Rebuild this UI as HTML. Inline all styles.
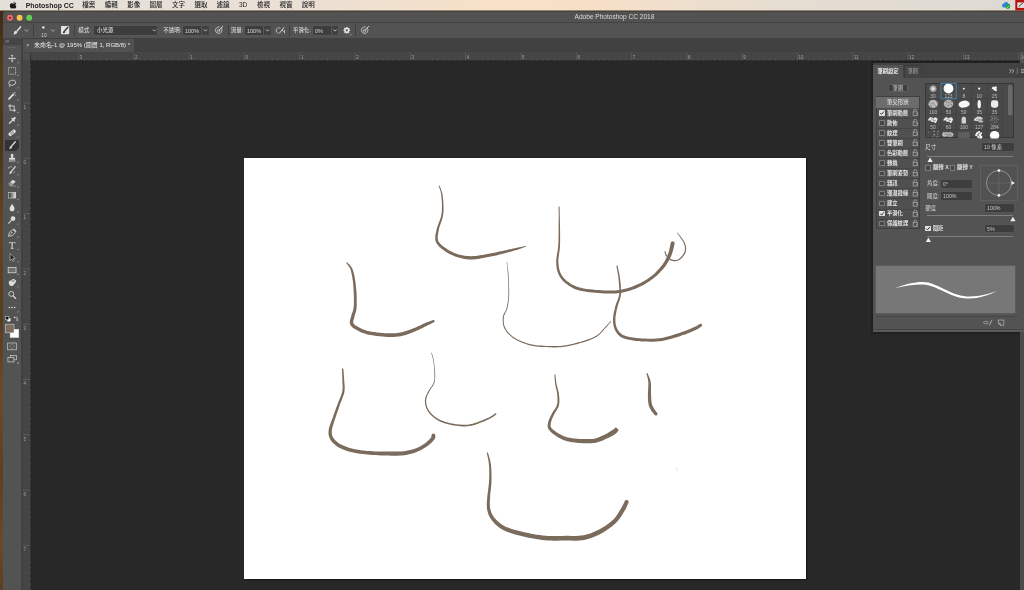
<!DOCTYPE html>
<html lang="zh-Hant"><head><meta charset="utf-8"><title>Adobe Photoshop CC 2018</title>
<style>
html,body{margin:0;padding:0;}
body{width:1024px;height:590px;overflow:hidden;background:#282828;position:relative;font-family:"Liberation Sans","Noto Sans CJK TC",sans-serif;color:#d0d0d0;}
div,span{position:absolute;box-sizing:border-box;white-space:nowrap;}
svg{position:absolute;left:0;top:0;overflow:visible;}
.t{line-height:1;transform-origin:0 0;}
.mb{font-size:6.5px;color:#222;top:2.3px;font-weight:500;}
.ob{font-size:5.5px;color:#d8d8d8;top:28.1px;font-weight:500;}
.in{background:#3d3d3d;border-radius:1px;box-shadow:0 0 0 .5px #5b5b5b;}
.sq{transform:scaleX(.9);}
.dd{background:#414141;border-radius:1px;box-shadow:0 0 0 .5px #595959;}
.sep{width:0.7px;background:#3e3e3e;top:24.5px;height:11.5px;}
.pl{font-size:5.4px;color:#dadada;}
.cb{width:5.6px;height:5.6px;background:#464646;border:0.5px solid #7c7c7c;border-radius:0.8px;}
.cbc{width:5.6px;height:5.6px;background:#e4e4e4;border-radius:0.8px;}
.num{font-size:4.9px;color:#bbbbbb;text-align:center;width:15.4px;}
.rl{font-size:4.5px;color:#a2a2a2;}
</style></head><body>
<div id="w" style="left:0;top:0;width:1024px;height:590px;will-change:transform;">

<div style="left:0;top:10px;width:4px;height:580px;background:linear-gradient(180deg,#3e2a14,#553a1b 10%,#4a3217 22%,#644624 38%,#573c1d 52%,#6a4b27 66%,#5c401f 80%,#68492a 92%,#5a3f20);"></div>
<div style="left:0;top:0;width:1024px;height:10.6px;background:linear-gradient(90deg,#e4dfd9 0%,#e9e0d7 25%,#f1e0cd 40%,#f8e1c6 50%,#f7dfc6 57%,#efdfcd 66%,#e4ddd2 78%,#dedad3 100%);border-bottom:1px solid #94887a;"></div>
<svg width="1024" height="11" viewBox="0 0 1024 11"><g fill="#1a1a1a"><path d="M14.9 3.1c-.9 0-1.3.5-1.9.5s-1.1-.5-1.8-.5c-1 0-2 .9-2 2.5 0 1.7 1.2 3.5 2.1 3.5.6 0 .8-.4 1.6-.4s.9.4 1.6.4c.9 0 1.7-1.5 2-2.4-1.3-.6-1.4-2.6-.1-3.2-.4-.5-1-.9-1.5-.9z" transform="translate(1.55,0.35) scale(.9)"/><path d="M13.3 2.9c0-.9.7-1.6 1.5-1.7.1.9-.7 1.7-1.5 1.7z" transform="translate(1.55,0.45) scale(.9)"/></g></svg>
<span class="t mb" style="left:25.7px;font-weight:bold;font-size:6.95px;top:2.6px;">Photoshop CC</span>
<span class="t mb" style="left:82.3px;">檔案</span>
<span class="t mb" style="left:104.7px;">編輯</span>
<span class="t mb" style="left:127.2px;">影像</span>
<span class="t mb" style="left:149.6px;">圖層</span>
<span class="t mb" style="left:172px;">文字</span>
<span class="t mb" style="left:194.4px;">選取</span>
<span class="t mb" style="left:216.6px;">濾鏡</span>
<span class="t mb" style="left:239px;">3D</span>
<span class="t mb" style="left:257px;">檢視</span>
<span class="t mb" style="left:279.4px;">視窗</span>
<span class="t mb" style="left:301.8px;">說明</span>
<svg width="1024" height="11" viewBox="0 0 1024 11"><path d="M1003.5 7.6h4.6a1.9 1.9 0 0 0 .3-3.8 2.3 2.3 0 0 0-4.3-.5 2.2 2.2 0 0 0-.6 4.3z" fill="#2f86dd"/><circle cx="1007.8" cy="6.6" r="2.3" fill="#23a033"/><path d="M1006.7 6.7l.8.8 1.4-1.6" stroke="#fff" stroke-width=".6" fill="none"/><rect x="1015.3" y="0" width="9" height="10.5" fill="#b3120f"/><rect x="1017.3" y="2.4" width="7" height="5.5" fill="#e6e0dc"/><path d="M1018.8 6.5l4.5-4" stroke="#222" stroke-width=".9"/></svg>
<div style="left:3.3px;top:10.6px;width:1021px;height:580px;background:#282828;border-top-left-radius:2.5px;overflow:hidden;">
</div>
<div style="left:3.3px;top:10.8px;width:1021px;height:12px;background:#525252;border-top-left-radius:2.5px;border-top:1px solid #47413a;border-bottom:0.6px solid #444;"></div>
<svg width="60" height="30" viewBox="0 0 60 30"><circle cx="10.05" cy="17.7" r="2.95" fill="#ee6a5e"/><circle cx="19.6" cy="17.7" r="2.95" fill="#f6c550"/><circle cx="29.2" cy="17.7" r="2.95" fill="#60cf56"/><circle cx="10.05" cy="17.7" r=".95" fill="#6e0f0b"/></svg>
<span class="t" style="left:574.6px;top:13.6px;font-size:6.55px;color:#dcdcdc;">Adobe Photoshop CC 2018</span>
<div style="left:3.3px;top:22px;width:1021px;height:16px;background:#535353;border-top:0.7px solid #434343;"></div>
<svg width="1024" height="60" viewBox="0 0 1024 60"><g fill="none" stroke="#e0e0e0" stroke-linecap="round"><path d="M20.5 26.9L17.3 30.7" stroke-width="1.6"/><path d="M16.3 30.9c-1.1-.3-2 .4-2.2 1.5-.1.9-.5 1.5-1.1 1.9 1.5.4 3.5-.1 4.1-1.5.4-.8 0-1.6-.8-1.9z" fill="#e0e0e0" stroke="none"/><path d="M25 29.8l1.5 1.5 1.5-1.5" stroke-width=".8" stroke="#c8c8c8"/><path d="M51.5 29.8l1.5 1.5 1.5-1.5" stroke-width=".8" stroke="#c8c8c8"/></g><circle cx="43.3" cy="27.4" r="1.2" fill="#f0f0f0"/><rect x="61" y="26" width="8.2" height="8.2" rx=".6" fill="#e3e3e3"/><path d="M67.9 27.2l-3 3.4" stroke="#3c3c3c" stroke-width="1.5" stroke-linecap="round"/><path d="M64.6 30.7c-.9 0-1.5.6-1.5 1.3 0 .5-.3.9-.7 1.1 1.1.3 2.6-.1 2.8-1.1.1-.6-.1-1.1-.6-1.3z" fill="#3c3c3c"/></svg>
<span class="t" style="left:41.3px;top:33.5px;font-size:4.7px;color:#d0d0d0;">10</span>
<div class="sep" style="left:32.6px;"></div><div class="sep" style="left:74.1px;"></div>
<span class="t ob" style="left:78.2px;">模式:</span>
<div class="in" style="left:93.7px;top:26.3px;width:63.4px;height:8.3px;background:#3d3d3d;"></div>
<span class="t ob" style="left:97px;">小光源</span>
<span class="t ob" style="left:163.3px;">不透明:</span>
<div class="in" style="left:182.8px;top:26.3px;width:18.2px;height:8.3px;"></div><span class="t ob sq" style="left:184.6px;font-size:6.1px;top:27.8px;">100%</span>
<div class="dd" style="left:202.3px;top:26.3px;width:6.4px;height:8.3px;"></div>
<div class="sep" style="left:227.5px;"></div>
<span class="t ob" style="left:230.8px;">流量:</span>
<div class="in" style="left:245px;top:26.3px;width:18px;height:8.3px;"></div><span class="t ob sq" style="left:246.8px;font-size:6.1px;top:27.8px;">100%</span>
<div class="dd" style="left:264.4px;top:26.3px;width:6.4px;height:8.3px;"></div>
<div class="sep" style="left:288.8px;"></div>
<span class="t ob" style="left:293px;">平滑化:</span>
<div class="in" style="left:313px;top:26.3px;width:17.6px;height:8.3px;"></div><span class="t ob sq" style="left:314.8px;font-size:6.1px;top:27.8px;">0%</span>
<div class="dd" style="left:332.2px;top:26.3px;width:6px;height:8.3px;"></div>
<div class="sep" style="left:355.3px;"></div>
<svg width="1024" height="60" viewBox="0 0 1024 60"><g fill="none" stroke="#d0d0d0" stroke-width=".85" stroke-linecap="round" transform="translate(.25 .1)"><path d="M152.9 29.7l1.25 1.3 1.25-1.3"/><path d="M203.9 29.7l1.25 1.3 1.25-1.3"/><path d="M266 29.7l1.25 1.3 1.25-1.3"/><path d="M333.6 29.7l1.25 1.3 1.25-1.3"/></g></svg>
<svg width="1024" height="60" viewBox="0 0 1024 60"><g fill="none" stroke="#d8d8d8" stroke-width=".75" stroke-linecap="round"><path d="M221.5 28.4a3.3 3.3 0 1 1-2.3-1.5"/><circle cx="218.4" cy="30.8" r="1.3" stroke-width=".6"/><path d="M222.6 26.4l-3.6 4" stroke-width="1"/><path d="M367.5 28.4a3.3 3.3 0 1 1-2.3-1.5"/><circle cx="364.4" cy="30.8" r="1.3" stroke-width=".6"/><path d="M368.6 26.4l-3.6 4" stroke-width="1"/><path d="M277.6 32.8c-1.5-.6-2-2.6-.9-4 .9-1.1 2.4-1.3 3.5-.7"/><path d="M279.3 33.3l2.7-3.3 1.4 1.1" stroke-width=".9"/><path d="M282.2 29.8l1.6-2.1" stroke-width="1"/><path d="M284.5 30.5v2.5" stroke-width=".8"/></g><g><circle cx="346.8" cy="30.3" r="2.5" fill="#e4e4e4"/><rect x="346.1" y="27" width="1.4" height="6.6" fill="#e4e4e4" transform="rotate(0 346.8 30.3)"/><rect x="346.1" y="27" width="1.4" height="6.6" fill="#e4e4e4" transform="rotate(45 346.8 30.3)"/><rect x="346.1" y="27" width="1.4" height="6.6" fill="#e4e4e4" transform="rotate(90 346.8 30.3)"/><rect x="346.1" y="27" width="1.4" height="6.6" fill="#e4e4e4" transform="rotate(135 346.8 30.3)"/><circle cx="346.8" cy="30.3" r="1.1" fill="#535353"/><path d="M349.8 34.6h1.8l-.9.9z" fill="#d0d0d0"/></g></svg>
<div style="left:21px;top:38px;width:1003px;height:14.6px;background:#414141;"></div>
<div style="left:23.2px;top:38.6px;width:110.8px;height:14px;background:#515151;"></div>
<span class="t" style="left:26px;top:42.4px;font-size:6px;color:#c6c6c6;">×</span>
<span class="t" style="left:34px;top:42.2px;font-size:6px;color:#ececec;">未命名-1 @ 195% (圖層 1, RGB/8) *</span>
<div style="left:21.6px;top:52.4px;width:1003px;height:8.6px;background:#454545;border-bottom:0.6px solid #2e2e2e;"></div>
<div style="left:21.6px;top:52.6px;width:9.2px;height:537.4px;background:#454545;border-right:0.6px solid #303030;"></div>
<div style="left:20.9px;top:52.6px;width:2.1px;height:537.4px;background:#414141;"></div>
<div style="left:23.4px;top:53.4px;width:6.4px;height:6.6px;background:#4f4f4f;"></div>
<svg width="1024" height="590" viewBox="0 0 1024 590"><g stroke="#6b6b6b" stroke-width=".5" fill="none"><path d="M34.36 59v1.3"/><path d="M39.89 59v1.3"/><path d="M45.42 59v1.3"/><path d="M50.95 58v2.3"/><path d="M56.48 59v1.3"/><path d="M62.01 59v1.3"/><path d="M67.54 59v1.3"/><path d="M73.07 59v1.3"/><path d="M84.13 59v1.3"/><path d="M89.66 59v1.3"/><path d="M95.19 59v1.3"/><path d="M100.72 59v1.3"/><path d="M106.25 58v2.3"/><path d="M111.78 59v1.3"/><path d="M117.31 59v1.3"/><path d="M122.84 59v1.3"/><path d="M128.37 59v1.3"/><path d="M139.43 59v1.3"/><path d="M144.96 59v1.3"/><path d="M150.49 59v1.3"/><path d="M156.02 59v1.3"/><path d="M161.55 58v2.3"/><path d="M167.08 59v1.3"/><path d="M172.61 59v1.3"/><path d="M178.14 59v1.3"/><path d="M183.67 59v1.3"/><path d="M194.73 59v1.3"/><path d="M200.26 59v1.3"/><path d="M205.79 59v1.3"/><path d="M211.32 59v1.3"/><path d="M216.85 58v2.3"/><path d="M222.38 59v1.3"/><path d="M227.91 59v1.3"/><path d="M233.44 59v1.3"/><path d="M238.97 59v1.3"/><path d="M250.03 59v1.3"/><path d="M255.56 59v1.3"/><path d="M261.09 59v1.3"/><path d="M266.62 59v1.3"/><path d="M272.15 58v2.3"/><path d="M277.68 59v1.3"/><path d="M283.21 59v1.3"/><path d="M288.74 59v1.3"/><path d="M294.27 59v1.3"/><path d="M305.33 59v1.3"/><path d="M310.86 59v1.3"/><path d="M316.39 59v1.3"/><path d="M321.92 59v1.3"/><path d="M327.45 58v2.3"/><path d="M332.98 59v1.3"/><path d="M338.51 59v1.3"/><path d="M344.04 59v1.3"/><path d="M349.57 59v1.3"/><path d="M360.63 59v1.3"/><path d="M366.16 59v1.3"/><path d="M371.69 59v1.3"/><path d="M377.22 59v1.3"/><path d="M382.75 58v2.3"/><path d="M388.28 59v1.3"/><path d="M393.81 59v1.3"/><path d="M399.34 59v1.3"/><path d="M404.87 59v1.3"/><path d="M415.93 59v1.3"/><path d="M421.46 59v1.3"/><path d="M426.99 59v1.3"/><path d="M432.52 59v1.3"/><path d="M438.05 58v2.3"/><path d="M443.58 59v1.3"/><path d="M449.11 59v1.3"/><path d="M454.64 59v1.3"/><path d="M460.17 59v1.3"/><path d="M471.23 59v1.3"/><path d="M476.76 59v1.3"/><path d="M482.29 59v1.3"/><path d="M487.82 59v1.3"/><path d="M493.35 58v2.3"/><path d="M498.88 59v1.3"/><path d="M504.41 59v1.3"/><path d="M509.94 59v1.3"/><path d="M515.47 59v1.3"/><path d="M526.53 59v1.3"/><path d="M532.06 59v1.3"/><path d="M537.59 59v1.3"/><path d="M543.12 59v1.3"/><path d="M548.65 58v2.3"/><path d="M554.18 59v1.3"/><path d="M559.71 59v1.3"/><path d="M565.24 59v1.3"/><path d="M570.77 59v1.3"/><path d="M581.83 59v1.3"/><path d="M587.36 59v1.3"/><path d="M592.89 59v1.3"/><path d="M598.42 59v1.3"/><path d="M603.95 58v2.3"/><path d="M609.48 59v1.3"/><path d="M615.01 59v1.3"/><path d="M620.54 59v1.3"/><path d="M626.07 59v1.3"/><path d="M637.13 59v1.3"/><path d="M642.66 59v1.3"/><path d="M648.19 59v1.3"/><path d="M653.72 59v1.3"/><path d="M659.25 58v2.3"/><path d="M664.78 59v1.3"/><path d="M670.31 59v1.3"/><path d="M675.84 59v1.3"/><path d="M681.37 59v1.3"/><path d="M692.43 59v1.3"/><path d="M697.96 59v1.3"/><path d="M703.49 59v1.3"/><path d="M709.02 59v1.3"/><path d="M714.55 58v2.3"/><path d="M720.08 59v1.3"/><path d="M725.61 59v1.3"/><path d="M731.14 59v1.3"/><path d="M736.67 59v1.3"/><path d="M747.73 59v1.3"/><path d="M753.26 59v1.3"/><path d="M758.79 59v1.3"/><path d="M764.32 59v1.3"/><path d="M769.85 58v2.3"/><path d="M775.38 59v1.3"/><path d="M780.91 59v1.3"/><path d="M786.44 59v1.3"/><path d="M791.97 59v1.3"/><path d="M803.03 59v1.3"/><path d="M808.56 59v1.3"/><path d="M814.09 59v1.3"/><path d="M819.62 59v1.3"/><path d="M825.15 58v2.3"/><path d="M830.68 59v1.3"/><path d="M836.21 59v1.3"/><path d="M841.74 59v1.3"/><path d="M847.27 59v1.3"/><path d="M858.33 59v1.3"/><path d="M863.86 59v1.3"/><path d="M869.39 59v1.3"/><path d="M874.92 59v1.3"/><path d="M880.45 58v2.3"/><path d="M885.98 59v1.3"/><path d="M891.51 59v1.3"/><path d="M897.04 59v1.3"/><path d="M902.57 59v1.3"/><path d="M913.63 59v1.3"/><path d="M919.16 59v1.3"/><path d="M924.69 59v1.3"/><path d="M930.22 59v1.3"/><path d="M935.75 58v2.3"/><path d="M941.28 59v1.3"/><path d="M946.81 59v1.3"/><path d="M952.34 59v1.3"/><path d="M957.87 59v1.3"/><path d="M968.93 59v1.3"/><path d="M974.46 59v1.3"/><path d="M979.99 59v1.3"/><path d="M985.52 59v1.3"/><path d="M991.05 58v2.3"/><path d="M996.58 59v1.3"/><path d="M1002.11 59v1.3"/><path d="M1007.64 59v1.3"/><path d="M1013.17 59v1.3"/><path d="M29.2 64.29h1.3"/><path d="M29.2 69.82h1.3"/><path d="M28.2 75.35h2.3"/><path d="M29.2 80.88h1.3"/><path d="M29.2 86.41h1.3"/><path d="M29.2 91.94h1.3"/><path d="M29.2 97.47h1.3"/><path d="M29.2 108.53h1.3"/><path d="M29.2 114.06h1.3"/><path d="M29.2 119.59h1.3"/><path d="M29.2 125.12h1.3"/><path d="M28.2 130.65h2.3"/><path d="M29.2 136.18h1.3"/><path d="M29.2 141.71h1.3"/><path d="M29.2 147.24h1.3"/><path d="M29.2 152.77h1.3"/><path d="M29.2 163.83h1.3"/><path d="M29.2 169.36h1.3"/><path d="M29.2 174.89h1.3"/><path d="M29.2 180.42h1.3"/><path d="M28.2 185.95h2.3"/><path d="M29.2 191.48h1.3"/><path d="M29.2 197.01h1.3"/><path d="M29.2 202.54h1.3"/><path d="M29.2 208.07h1.3"/><path d="M29.2 219.13h1.3"/><path d="M29.2 224.66h1.3"/><path d="M29.2 230.19h1.3"/><path d="M29.2 235.72h1.3"/><path d="M28.2 241.25h2.3"/><path d="M29.2 246.78h1.3"/><path d="M29.2 252.31h1.3"/><path d="M29.2 257.84h1.3"/><path d="M29.2 263.37h1.3"/><path d="M29.2 274.43h1.3"/><path d="M29.2 279.96h1.3"/><path d="M29.2 285.49h1.3"/><path d="M29.2 291.02h1.3"/><path d="M28.2 296.55h2.3"/><path d="M29.2 302.08h1.3"/><path d="M29.2 307.61h1.3"/><path d="M29.2 313.14h1.3"/><path d="M29.2 318.67h1.3"/><path d="M29.2 329.73h1.3"/><path d="M29.2 335.26h1.3"/><path d="M29.2 340.79h1.3"/><path d="M29.2 346.32h1.3"/><path d="M28.2 351.85h2.3"/><path d="M29.2 357.38h1.3"/><path d="M29.2 362.91h1.3"/><path d="M29.2 368.44h1.3"/><path d="M29.2 373.97h1.3"/><path d="M29.2 385.03h1.3"/><path d="M29.2 390.56h1.3"/><path d="M29.2 396.09h1.3"/><path d="M29.2 401.62h1.3"/><path d="M28.2 407.15h2.3"/><path d="M29.2 412.68h1.3"/><path d="M29.2 418.21h1.3"/><path d="M29.2 423.74h1.3"/><path d="M29.2 429.27h1.3"/><path d="M29.2 440.33h1.3"/><path d="M29.2 445.86h1.3"/><path d="M29.2 451.39h1.3"/><path d="M29.2 456.92h1.3"/><path d="M28.2 462.45h2.3"/><path d="M29.2 467.98h1.3"/><path d="M29.2 473.51h1.3"/><path d="M29.2 479.04h1.3"/><path d="M29.2 484.57h1.3"/><path d="M29.2 495.63h1.3"/><path d="M29.2 501.16h1.3"/><path d="M29.2 506.69h1.3"/><path d="M29.2 512.22h1.3"/><path d="M28.2 517.75h2.3"/><path d="M29.2 523.28h1.3"/><path d="M29.2 528.81h1.3"/><path d="M29.2 534.34h1.3"/><path d="M29.2 539.87h1.3"/><path d="M29.2 550.93h1.3"/><path d="M29.2 556.46h1.3"/><path d="M29.2 561.99h1.3"/><path d="M29.2 567.52h1.3"/><path d="M28.2 573.05h2.3"/><path d="M29.2 578.58h1.3"/><path d="M29.2 584.11h1.3"/><path d="M29.2 589.64h1.3"/></g><g stroke="#6c6c6c" stroke-width=".55" fill="none"><path d="M78.6 52.8v7.5"/><path d="M133.9 52.8v7.5"/><path d="M189.2 52.8v7.5"/><path d="M244.5 52.8v7.5"/><path d="M299.8 52.8v7.5"/><path d="M355.1 52.8v7.5"/><path d="M410.4 52.8v7.5"/><path d="M465.7 52.8v7.5"/><path d="M521 52.8v7.5"/><path d="M576.3 52.8v7.5"/><path d="M631.6 52.8v7.5"/><path d="M686.9 52.8v7.5"/><path d="M742.2 52.8v7.5"/><path d="M797.5 52.8v7.5"/><path d="M852.8 52.8v7.5"/><path d="M908.1 52.8v7.5"/><path d="M963.4 52.8v7.5"/><path d="M1018.7 52.8v7.5"/><path d="M23 103h7.5"/><path d="M23 158.3h7.5"/><path d="M23 213.6h7.5"/><path d="M23 268.9h7.5"/><path d="M23 324.2h7.5"/><path d="M23 379.5h7.5"/><path d="M23 434.8h7.5"/><path d="M23 490.1h7.5"/><path d="M23 545.4h7.5"/></g></svg>
<span class="t rl" style="left:79.7px;top:56.4px;">3</span>
<span class="t rl" style="left:135px;top:56.4px;">2</span>
<span class="t rl" style="left:190.3px;top:56.4px;">1</span>
<span class="t rl" style="left:245.6px;top:56.4px;">0</span>
<span class="t rl" style="left:300.9px;top:56.4px;">1</span>
<span class="t rl" style="left:356.2px;top:56.4px;">2</span>
<span class="t rl" style="left:411.5px;top:56.4px;">3</span>
<span class="t rl" style="left:466.8px;top:56.4px;">4</span>
<span class="t rl" style="left:522.1px;top:56.4px;">5</span>
<span class="t rl" style="left:577.4px;top:56.4px;">6</span>
<span class="t rl" style="left:632.7px;top:56.4px;">7</span>
<span class="t rl" style="left:688px;top:56.4px;">8</span>
<span class="t rl" style="left:743.3px;top:56.4px;">9</span>
<span class="t rl" style="left:798.6px;top:56.4px;">10</span>
<span class="t rl" style="left:853.9px;top:56.4px;">11</span>
<span class="t rl" style="left:909.2px;top:56.4px;">12</span>
<span class="t rl" style="left:964.5px;top:56.4px;">13</span>
<span class="t rl" style="left:23.4px;top:105.7px;">1</span>
<span class="t rl" style="left:23.4px;top:161px;">0</span>
<span class="t rl" style="left:23.4px;top:216.3px;">1</span>
<span class="t rl" style="left:23.4px;top:271.6px;">2</span>
<span class="t rl" style="left:23.4px;top:326.9px;">3</span>
<span class="t rl" style="left:23.4px;top:382.2px;">4</span>
<span class="t rl" style="left:23.4px;top:437.5px;">5</span>
<span class="t rl" style="left:23.4px;top:492.8px;">6</span>
<span class="t rl" style="left:23.4px;top:548.1px;">7</span>
<div style="left:1020.3px;top:52.4px;width:3.7px;height:537.6px;background:#4a4a4a;"></div>
<div style="left:1020.3px;top:52.4px;width:3.7px;height:10.5px;background:#535353;"></div>
<span class="t rl" style="left:1020.8px;top:56.4px;">14</span>
<div style="left:3.3px;top:38px;width:17.8px;height:552px;background:#535353;"></div>
<div style="left:3.3px;top:38px;width:17.8px;height:6.7px;background:#454545;"></div>
<svg width="30" height="50" viewBox="0 0 30 50"><path d="M5.8 40l1.2 1.3-1.2 1.3M7.6 40l1.2 1.3-1.2 1.3" fill="none" stroke="#b4b4b4" stroke-width=".55"/></svg>
<div style="left:8.4px;top:47px;width:8px;height:0.7px;background:#616161;"></div>
<div style="left:5px;top:140.2px;width:14.4px;height:10.8px;background:#333;border-radius:1px;"></div>
<svg width="24" height="590" viewBox="0 0 24 590"><g transform="translate(12.1 58.4) scale(.92)"><path d="M0-4.2L1.3-2.6H.45V-.45H2.6V-1.3L4.2 0 2.6 1.3V.45H.45V2.6H1.3L0 4.2-1.3 2.6H-.45V.45H-2.6V1.3L-4.2 0-2.6-1.3V-.45H-.45V-2.6H-1.3Z" fill="#dcdcdc"/></g><path d="M18.4 61.8v1.4h-1.4z" fill="#bcbcbc"/><g transform="translate(12.1 70.9) scale(.92)"><rect x="-3.8" y="-3.6" width="7.6" height="7.2" fill="none" stroke="#dcdcdc" stroke-width=".8" stroke-dasharray="1.5 .9"/></g><path d="M18.4 74.3v1.4h-1.4z" fill="#bcbcbc"/><g transform="translate(12.1 83.4) scale(.92)"><ellipse cx=".3" cy="-.7" rx="3.9" ry="2.7" fill="none" stroke="#dcdcdc" stroke-width=".8" transform="rotate(-12)"/><path d="M-2.8 1.2c-.8.6-.8 1.6.1 1.7.5 0 .4.7-.2 1.2" fill="none" stroke="#dcdcdc" stroke-width=".7"/></g><path d="M18.4 86.8v1.4h-1.4z" fill="#bcbcbc"/><g transform="translate(12.1 95.6) scale(.92)"><path d="M-3.4 3.6L.8 -.8" stroke="#dcdcdc" stroke-width="1.9" stroke-linecap="round"/><path d="M.6-.6L1.9-1.9" stroke="#dcdcdc" stroke-width="1.9"/><path d="M2.6-3.8v1.6M1.8-3h1.6M3.7-.9v1.2M.2-3.3l.5.5M3.8-3.4l-.5.5" stroke="#dcdcdc" stroke-width=".55"/></g><path d="M18.4 99v1.4h-1.4z" fill="#bcbcbc"/><g transform="translate(12.1 108.1) scale(.92)"><path d="M-2.3-4.3V2.3H4.3M-4.3-2.3H2.3V4.3" fill="none" stroke="#dcdcdc" stroke-width=".95"/></g><path d="M18.4 111.5v1.4h-1.4z" fill="#bcbcbc"/><g transform="translate(12.1 120.6) scale(.92)"><path d="M-3.8 3.8L-3.3 2.3.3-1.3 1.3-.3-2.3 3.3Z" fill="#dcdcdc"/><path d="M-.4-2.5L2.5.4" stroke="#dcdcdc" stroke-width="1.3" stroke-linecap="round"/><path d="M1.2-1.2L2.8-2.8" stroke="#dcdcdc" stroke-width="2.3" stroke-linecap="round"/></g><path d="M18.4 124v1.4h-1.4z" fill="#bcbcbc"/><g transform="translate(12.1 132.8) scale(.92)"><rect x="-4.4" y="-2" width="8.8" height="4" rx="1.6" fill="#dcdcdc" transform="rotate(-38)"/><g transform="rotate(-38)" fill="#535353"><rect x="-1.5" y="-2" width=".5" height="4"/><rect x="1" y="-2" width=".5" height="4"/><circle cx="-.5" cy="-.6" r=".3"/><circle cx=".5" cy=".6" r=".3"/><circle cx=".5" cy="-.6" r=".3"/><circle cx="-.5" cy=".6" r=".3"/></g></g><path d="M18.4 136.2v1.4h-1.4z" fill="#bcbcbc"/><g transform="translate(12.1 145.4) scale(.92)"><path d="M3.5-4L-.3.4" stroke="#dcdcdc" stroke-width="1.4" stroke-linecap="round"/><path d="M-.7.7c-.9-.2-1.7.4-1.8 1.3-.1.8-.5 1.3-1 1.6 1.3.3 2.9-.1 3.4-1.3.3-.6 0-1.3-.6-1.6z" fill="#dcdcdc"/></g><path d="M18.4 148.8v1.4h-1.4z" fill="#bcbcbc"/><g transform="translate(12.1 157.9) scale(.92)"><path d="M-1.3-2.2a1.5 1.5 0 1 1 2.6 0c-.4.7-.5 1.3-.3 2.1H3.2V2H-3.2V-.1H-1c.2-.8.1-1.4-.3-2.1z" fill="#dcdcdc"/><rect x="-3.6" y="2.9" width="7.2" height=".9" fill="#dcdcdc"/></g><path d="M18.4 161.3v1.4h-1.4z" fill="#bcbcbc"/><g transform="translate(12.1 170.4) scale(.92)"><path d="M3.5-4L-.3.4" stroke="#dcdcdc" stroke-width="1.3" stroke-linecap="round"/><path d="M-.7.7c-.9-.2-1.7.4-1.8 1.3-.1.8-.5 1.3-1 1.6 1.3.3 2.9-.1 3.4-1.3.3-.6 0-1.3-.6-1.6z" fill="#dcdcdc"/><path d="M-3.8-2.6a3 3 0 0 1 4-1M2.8 1a3 3 0 0 1-1.2 2.2" fill="none" stroke="#dcdcdc" stroke-width=".6"/><path d="M-4.3-3.4l.4 1.3 1.2-.5z" fill="#dcdcdc"/></g><path d="M18.4 173.8v1.4h-1.4z" fill="#bcbcbc"/><g transform="translate(12.1 182.7) scale(.92)"><path d="M-3.9 1.1L.6-3.3 4 -1.3 -.8 3.2H-2.6Z" fill="#dcdcdc"/><path d="M-3.9 1.1L-1.7-1 .8 1.5-.8 3.2H-2.6Z" fill="#8d8d8d"/><path d="M-1 3.6H4" stroke="#dcdcdc" stroke-width=".5"/></g><path d="M18.4 186.1v1.4h-1.4z" fill="#bcbcbc"/><g transform="translate(12.1 195.2) scale(.92)"><defs><linearGradient id="gg" x1="0" x2="1"><stop offset="0" stop-color="#2e2e2e"/><stop offset="1" stop-color="#e8e8e8"/></linearGradient></defs><rect x="-4" y="-3.1" width="8" height="6.2" fill="url(#gg)" stroke="#dcdcdc" stroke-width=".6"/></g><path d="M18.4 198.6v1.4h-1.4z" fill="#bcbcbc"/><g transform="translate(12.1 207.7) scale(.92)"><path d="M0-4.2C1 -2.4 2.7-.7 2.7 1.3a2.7 2.7 0 0 1-5.4 0C-2.7-.7-1-2.4 0-4.2z" fill="#dcdcdc"/></g><path d="M18.4 211.1v1.4h-1.4z" fill="#bcbcbc"/><g transform="translate(12.1 219.8) scale(.92)"><circle cx="1" cy="-1.3" r="2.6" fill="#dcdcdc"/><path d="M-.9.7L-3.8 3.8" stroke="#dcdcdc" stroke-width="1.1" stroke-linecap="round"/></g><path d="M18.4 223.2v1.4h-1.4z" fill="#bcbcbc"/><g transform="translate(12.1 232.6) scale(.92)"><path d="M-4 4L-2.8-.6 1.2-3.3 3.7-.4 .8 3.2Z" fill="none" stroke="#dcdcdc" stroke-width=".8" stroke-linejoin="round"/><path d="M-4 4L-.6.6" stroke="#dcdcdc" stroke-width=".6"/><circle cx="-.2" cy=".2" r=".8" fill="#dcdcdc"/><path d="M1.6-4.1L4.3-1" stroke="#dcdcdc" stroke-width="1.2"/></g><path d="M18.4 236v1.4h-1.4z" fill="#bcbcbc"/><g transform="translate(12.1 245.3) scale(.92)"><text x="0" y="4" font-family="Liberation Serif,serif" font-size="12" text-anchor="middle" fill="#dcdcdc">T</text></g><path d="M18.4 248.7v1.4h-1.4z" fill="#bcbcbc"/><g transform="translate(12.1 257.4) scale(.92)"><path d="M-2.2-4.2L-2.2 3.4-.3 1.7 1 4.3 2.2 3.7 .9 1.2 3.3 1Z" fill="#1e1e1e" stroke="#dcdcdc" stroke-width=".6" stroke-linejoin="round"/></g><path d="M18.4 260.8v1.4h-1.4z" fill="#bcbcbc"/><g transform="translate(12.1 270.1) scale(.92)"><rect x="-4.3" y="-2.9" width="8.6" height="5.8" fill="#6e6e6e" stroke="#dcdcdc" stroke-width=".8"/></g><path d="M18.4 273.5v1.4h-1.4z" fill="#bcbcbc"/><g transform="translate(12.1 282.4) scale(.92)"><path d="M-3.6.2c0-1.2.7-2 1.8-2.3.9-.3 1.8-1.2 2.8-1.5 1.1-.3 2 .2 2.3 1 .8 0 1.3.6 1.1 1.4C4.1.4 2.7 1.6 1.6 2.7 1 3.3.5 3.9-.7 4c-1.7.1-2.9-1.7-2.9-3.8z" fill="#dcdcdc"/><path d="M-1.4-1.3c1.2-.4 2.3-.2 3.4.5M-.2-2.3c1.3-.2 2.6.2 3.6 1" stroke="#535353" stroke-width=".55" fill="none"/></g><path d="M18.4 285.8v1.4h-1.4z" fill="#bcbcbc"/><g transform="translate(12.1 294.9) scale(.92)"><circle cx="-.9" cy="-1.1" r="2.7" fill="none" stroke="#dcdcdc" stroke-width=".9"/><path d="M1.1 1L3.9 3.9" stroke="#dcdcdc" stroke-width="1.3" stroke-linecap="round"/></g><g transform="translate(12.1 307.5) scale(.92)"><circle cx="-2.9" cy="0" r=".85" fill="#dcdcdc"/><circle cx="0" cy="0" r=".85" fill="#dcdcdc"/><circle cx="2.9" cy="0" r=".85" fill="#dcdcdc"/></g><path d="M18.4 310.9v1.4h-1.4z" fill="#bcbcbc"/><rect x="7.3" y="318.3" width="3" height="3" fill="#fff" stroke="#ccc" stroke-width=".3"/><rect x="5.6" y="316.6" width="3.2" height="3.2" fill="#111" stroke="#ddd" stroke-width=".5"/><path d="M14.3 317.4h2.9v3" fill="none" stroke="#d8d8d8" stroke-width=".6"/><path d="M14.9 316.3l-1.3 1.1 1.3 1.1zM16.1 319.8l1.1 1.3 1.1-1.3z" fill="#d8d8d8"/><rect x="10.1" y="329.2" width="8.7" height="8.4" fill="#ffffff" stroke="#d9d9d9" stroke-width=".4"/><rect x="5.4" y="324.2" width="8.6" height="8.6" fill="#7d6b5d" stroke="#cfcfcf" stroke-width=".6"/><rect x="7.7" y="343" width="8.6" height="6.8" fill="none" stroke="#d0d0d0" stroke-width=".7"/><circle cx="12" cy="346.4" r="2" fill="none" stroke="#d0d0d0" stroke-width=".6" stroke-dasharray=".8 .6"/><rect x="10.4" y="355.4" width="6" height="4.4" fill="none" stroke="#d0d0d0" stroke-width=".7"/><rect x="7.9" y="357.5" width="6" height="4.4" fill="#535353" stroke="#d0d0d0" stroke-width=".7"/><path d="M18.6 361.7v1.7h-1.7z" fill="#c0c0c0"/></svg>
<div style="left:244px;top:157.75px;width:562.2px;height:421.3px;background:#fff;box-shadow:1px 1px 1.5px rgba(0,0,0,.45);"></div>
<svg width="1024" height="590" viewBox="0 0 1024 590"><path d="M438.6 185.8 L438.8 186.6 L439.2 187.6 L439.7 188.8 L440.2 190.3 L440.7 191.8 L441.1 193.6 L441.3 195.5 L441.5 197.7 L441.7 200.2 L441.9 203 L441.9 205.8 L441.9 208.7 L441.8 211.4 L441.5 213.9 L441.1 216.2 L440.4 218.4 L439.7 220.6 L438.8 222.8 L438 224.9 L437.3 227 L436.7 229.1 L436.3 231 L435.9 232.8 L435.5 234.6 L435.3 236.4 L435.2 238.2 L435.3 239.9 L435.8 241.7 L436.5 243.3 L437.6 244.8 L438.8 246.2 L440.2 247.5 L441.6 248.7 L443.1 249.8 L444.6 250.9 L446.1 251.9 L447.8 252.9 L449.5 253.9 L451.3 254.8 L453.1 255.6 L455 256.4 L456.8 257 L458.7 257.6 L460.6 258.1 L462.5 258.6 L464.5 258.9 L466.5 259.2 L468.6 259.4 L470.8 259.4 L473.1 259.4 L475.5 259.2 L478 258.9 L480.5 258.5 L483 258.1 L485.6 257.6 L488.1 257.1 L490.7 256.6 L493.4 256 L496.2 255.4 L498.9 254.7 L501.6 254 L504 253.4 L506.3 252.8 L508.4 252.3 L510.3 251.8 L512.1 251.3 L513.7 250.8 L515.3 250.3 L516.8 249.9 L518.2 249.4 L519.6 248.9 L521 248.5 L522.3 248 L523.5 247.6 L524.5 247.2 L525.4 246.8 L526.1 246.6 L525.9 246 L525.2 246.1 L524.3 246.3 L523.2 246.5 L522 246.8 L520.6 247 L519.2 247.3 L517.8 247.6 L516.3 247.9 L514.8 248.2 L513.2 248.6 L511.5 248.9 L509.7 249.3 L507.8 249.7 L505.7 250.2 L503.4 250.7 L500.9 251.2 L498.2 251.8 L495.5 252.5 L492.8 253 L490.1 253.6 L487.5 254.1 L485 254.5 L482.5 254.9 L480 255.3 L477.6 255.7 L475.2 255.9 L472.9 256.1 L470.8 256.2 L468.8 256.1 L466.8 256 L464.9 255.8 L463.1 255.5 L461.3 255.1 L459.5 254.7 L457.8 254.2 L456 253.6 L454.3 252.9 L452.5 252.1 L450.8 251.3 L449.2 250.4 L447.7 249.5 L446.2 248.5 L444.8 247.5 L443.3 246.5 L442 245.4 L440.7 244.3 L439.7 243.1 L438.8 241.9 L438.2 240.7 L437.9 239.5 L437.7 238.1 L437.7 236.6 L437.9 235 L438.2 233.3 L438.5 231.4 L438.9 229.5 L439.3 227.6 L440 225.6 L440.7 223.5 L441.5 221.3 L442.2 219 L442.9 216.6 L443.3 214.1 L443.5 211.5 L443.6 208.7 L443.5 205.8 L443.4 202.9 L443.2 200.1 L442.9 197.6 L442.7 195.3 L442.3 193.3 L441.8 191.5 L441.3 189.9 L440.7 188.5 L440.2 187.2 L439.7 186.2 L439.4 185.4Z" fill="#7a6b5c"/>
<path d="M346.2 263.1 L346.6 263.6 L347.2 264.3 L347.8 265.1 L348.5 266 L349.2 266.9 L349.9 267.9 L350.3 269 L350.8 270.1 L351.1 271.4 L351.4 272.8 L351.7 274.2 L352 275.7 L352.3 277.3 L352.5 279 L352.8 280.7 L353 282.6 L353.2 284.4 L353.4 286.4 L353.5 288.4 L353.6 290.4 L353.7 292.5 L353.8 294.6 L353.9 296.9 L353.9 299.2 L353.9 301.5 L353.9 303.7 L353.8 305.7 L353.6 307.5 L353.4 308.9 L353.1 310.2 L352.8 311.3 L352.4 312.4 L352 313.4 L351.6 314.6 L351.3 315.7 L351 316.8 L350.7 317.9 L350.3 319.1 L350 320.3 L349.8 321.6 L349.8 323 L350.1 324.3 L350.7 325.5 L351.6 326.6 L352.5 327.4 L353.6 328.2 L354.7 329 L355.9 329.6 L357.2 330.3 L358.5 331 L359.8 331.7 L361.3 332.4 L362.9 333 L364.6 333.6 L366.5 334.2 L368.6 334.7 L371 335.1 L373.7 335.6 L376.5 336 L379.4 336.3 L382.3 336.6 L385 336.8 L387.5 336.9 L389.8 337 L391.9 337 L393.9 337 L395.8 336.8 L397.7 336.6 L399.6 336.4 L401.6 336 L403.6 335.5 L405.7 334.9 L407.7 334.2 L409.8 333.5 L411.7 332.8 L413.6 332 L415.3 331.3 L417 330.6 L418.6 329.9 L420.1 329.1 L421.6 328.4 L423 327.7 L424.3 327 L425.6 326.4 L426.9 325.7 L428.3 325 L429.7 324.4 L431 323.7 L432.2 323.1 L433.1 322.7 L433.9 322.3 L434.3 322 L434.5 321.6 L434.6 321.2 L434.5 320.7 L434.2 320.3 L433.8 320.1 L433.4 320 L432.9 320.1 L432.2 320.4 L431.1 320.8 L429.9 321.2 L428.5 321.7 L427.1 322.3 L425.6 322.8 L424.2 323.4 L422.8 324 L421.5 324.7 L420.1 325.4 L418.6 326.1 L417.2 326.8 L415.7 327.4 L414.1 328.1 L412.3 328.8 L410.5 329.5 L408.5 330.2 L406.6 330.8 L404.6 331.5 L402.7 332 L400.8 332.4 L399 332.7 L397.2 333 L395.5 333.2 L393.7 333.3 L391.8 333.3 L389.8 333.3 L387.7 333.3 L385.3 333.2 L382.6 333 L379.8 332.7 L376.9 332.4 L374.2 332.1 L371.6 331.7 L369.4 331.3 L367.4 330.9 L365.7 330.3 L364.1 329.8 L362.7 329.2 L361.3 328.6 L360 327.9 L358.8 327.3 L357.6 326.6 L356.5 326 L355.6 325.4 L354.7 324.8 L354.1 324.2 L353.6 323.6 L353.3 323.1 L353.2 322.6 L353.2 321.9 L353.3 321 L353.5 320 L353.9 318.9 L354.2 317.7 L354.5 316.5 L354.7 315.4 L355 314.4 L355.4 313.4 L355.7 312.2 L356.1 310.9 L356.4 309.4 L356.6 307.7 L356.7 305.8 L356.7 303.7 L356.7 301.5 L356.7 299.1 L356.7 296.8 L356.6 294.5 L356.5 292.3 L356.3 290.3 L356.1 288.2 L355.9 286.2 L355.7 284.2 L355.5 282.2 L355.2 280.4 L354.9 278.6 L354.6 276.9 L354.2 275.3 L353.9 273.7 L353.5 272.2 L353.1 270.8 L352.6 269.5 L352.1 268.2 L351.4 267 L350.6 265.9 L349.7 265 L348.9 264.1 L348.1 263.4 L347.5 262.8 L347 262.3Z" fill="#7a6b5c"/>
<path d="M558.6 206.4 L558.6 208.1 L558.6 210.4 L558.7 213.2 L558.7 216.2 L558.7 219.4 L558.6 222.5 L558.6 225.5 L558.6 228.4 L558.6 231.4 L558.6 234.4 L558.5 237.4 L558.5 240.4 L558.4 243.2 L558.2 245.8 L558 248.3 L557.7 250.6 L557.3 252.8 L556.9 255 L556.6 257 L556.3 259.1 L556.2 261.1 L556.2 263 L556.3 264.8 L556.4 266.6 L556.7 268.3 L557 269.9 L557.4 271.5 L558 273 L558.6 274.5 L559.3 275.9 L560.1 277.3 L561 278.6 L562.1 279.9 L563.2 281.2 L564.6 282.4 L566 283.6 L567.6 284.8 L569.3 286 L571.1 287.1 L573.1 288.2 L575.3 289.2 L577.7 290 L580.3 290.7 L583.1 291.3 L586.1 291.8 L589.2 292.2 L592.3 292.5 L595.4 292.8 L598.4 293.1 L601.3 293.3 L604.3 293.4 L607.3 293.6 L610.3 293.6 L613.2 293.6 L616.2 293.4 L619 293.1 L621.8 292.7 L624.5 292.1 L627.1 291.4 L629.7 290.7 L632.3 289.8 L634.8 288.9 L637.2 287.9 L639.6 286.8 L642 285.7 L644.3 284.4 L646.5 283.1 L648.7 281.7 L650.8 280.3 L652.8 278.8 L654.8 277.3 L656.6 275.7 L658.4 274 L660.1 272.3 L661.7 270.6 L663.2 268.9 L664.6 267.2 L665.9 265.5 L667 263.8 L668.1 262.1 L669 260.4 L669.9 258.7 L670.7 257.1 L671.4 255.4 L672.1 253.6 L672.7 251.6 L673.2 249.7 L673.7 247.8 L674.1 246.1 L674.4 244.8 L674.6 243.8 L674.7 243 L674.4 242.3 L673.9 241.7 L673.2 241.4 L672.4 241.3 L671.7 241.6 L671.1 242.1 L670.8 242.8 L670.5 243.9 L670.2 245.3 L669.9 247 L669.5 248.8 L669.1 250.6 L668.6 252.4 L668 254 L667.4 255.6 L666.7 257.2 L665.9 258.8 L665.1 260.4 L664.2 262 L663.2 263.6 L662 265.2 L660.7 266.8 L659.3 268.5 L657.8 270.1 L656.2 271.8 L654.6 273.4 L652.8 274.9 L651 276.4 L649.1 277.8 L647.1 279.2 L645 280.5 L642.8 281.8 L640.6 283 L638.3 284.1 L636 285.1 L633.7 286.1 L631.3 287 L628.8 287.8 L626.3 288.5 L623.8 289.1 L621.2 289.7 L618.6 290.1 L615.9 290.4 L613.1 290.6 L610.3 290.6 L607.4 290.6 L604.4 290.5 L601.5 290.3 L598.6 290.1 L595.6 289.9 L592.6 289.6 L589.5 289.3 L586.5 288.9 L583.6 288.4 L581 287.8 L578.5 287.2 L576.4 286.5 L574.3 285.6 L572.5 284.7 L570.7 283.7 L569.1 282.6 L567.6 281.5 L566.2 280.4 L565 279.3 L564 278.2 L563 277.1 L562.2 276 L561.5 274.8 L560.8 273.5 L560.2 272.2 L559.7 270.8 L559.3 269.3 L559 267.9 L558.7 266.3 L558.6 264.7 L558.4 262.9 L558.4 261.1 L558.4 259.2 L558.6 257.3 L558.9 255.3 L559.2 253.1 L559.5 250.9 L559.8 248.5 L560 246 L560.1 243.3 L560.1 240.4 L560.1 237.5 L560.1 234.4 L560.1 231.4 L560 228.4 L560 225.5 L559.9 222.5 L559.9 219.4 L559.8 216.2 L559.7 213.2 L559.7 210.4 L559.6 208.1 L559.6 206.4Z" fill="#7a6b5c"/>
<path d="M677 232.8 L677.7 233.8 L678.7 235.2 L679.8 236.8 L681 238.6 L682.2 240.3 L683.2 242 L683.9 243.5 L684.3 244.9 L684.7 246.1 L684.9 247.4 L685 248.6 L684.9 249.7 L684.7 250.9 L684.4 252 L683.9 253.1 L683.2 254.3 L682.3 255.6 L681.3 256.7 L680.3 257.8 L679.3 258.6 L678.3 259.3 L677.4 259.7 L676.3 259.9 L675.3 260 L674.2 259.9 L673.1 259.8 L672.1 259.5 L671.2 259.2 L670.4 258.8 L669.6 258.2 L668.8 257.5 L668.1 256.7 L667.4 255.8 L666.9 255.1 L666.4 254.4 L666.1 253.8 L665.9 253.3 L665.7 252.7 L665.7 252.2 L665.6 251.7 L665.6 251.3 L665.6 251 L664.6 251 L664.7 251.4 L664.7 251.8 L664.7 252.3 L664.7 252.9 L664.8 253.6 L665 254.3 L665.4 255 L665.9 255.7 L666.5 256.6 L667.2 257.4 L668 258.3 L668.8 259.1 L669.8 259.8 L670.8 260.4 L671.8 260.7 L672.9 261 L674.1 261.2 L675.3 261.2 L676.5 261.1 L677.7 260.8 L678.9 260.3 L680 259.6 L681.1 258.7 L682.3 257.6 L683.3 256.3 L684.2 255 L685 253.7 L685.6 252.4 L685.9 251.1 L686.1 249.9 L686.2 248.6 L686.1 247.2 L685.8 245.9 L685.4 244.5 L684.9 243.1 L684.1 241.5 L683.1 239.8 L681.8 238 L680.5 236.3 L679.3 234.7 L678.3 233.4 L677.6 232.4Z" fill="#7a6b5c"/>
<path d="M616.4 265.8 L616.6 267 L616.9 268.6 L617.3 270.4 L617.6 272.5 L618 274.7 L618.3 276.9 L618.5 279 L618.7 281.1 L618.9 283.3 L619.1 285.5 L619.3 287.8 L619.4 290 L619.3 292.1 L619.2 294.1 L618.8 296 L618.4 297.7 L617.8 299.5 L617.1 301.2 L616.4 303 L615.8 304.8 L615.2 306.6 L614.8 308.5 L614.4 310.4 L613.9 312.3 L613.6 314.1 L613.3 316 L613.1 317.8 L613 319.6 L613 321.3 L613.1 322.9 L613.3 324.5 L613.6 326.1 L614 327.6 L614.5 329 L615.2 330.4 L615.9 331.7 L616.7 333 L617.6 334.2 L618.7 335.3 L620 336.4 L621.6 337.4 L623.4 338.2 L625.5 338.9 L627.9 339.6 L630.4 340.1 L633.2 340.5 L636 340.9 L638.8 341.1 L641.6 341.4 L644.4 341.5 L647.3 341.6 L650.2 341.7 L653.2 341.7 L656.2 341.5 L659.2 341.3 L662.2 340.9 L665.3 340.3 L668.4 339.6 L671.6 338.7 L674.7 337.8 L677.6 336.9 L680.4 336 L682.9 335.1 L685.2 334.4 L687.4 333.6 L689.4 332.8 L691.2 332 L692.9 331.3 L694.4 330.6 L695.8 330 L697.1 329.3 L698.2 328.7 L699.1 328.1 L699.9 327.6 L700.6 327.1 L701.1 326.7 L701.5 326.4 L701.9 326 L702.1 325.5 L702.1 324.9 L701.9 324.4 L701.5 324 L701 323.8 L700.4 323.8 L699.9 324 L699.4 324.2 L698.9 324.6 L698.2 325 L697.5 325.5 L696.6 326 L695.6 326.5 L694.4 327 L693.1 327.6 L691.6 328.3 L689.9 329 L688.1 329.8 L686.2 330.5 L684.1 331.3 L681.9 332.1 L679.4 332.9 L676.6 333.8 L673.7 334.8 L670.7 335.7 L667.7 336.6 L664.7 337.3 L661.8 337.9 L658.9 338.3 L656 338.5 L653.1 338.7 L650.2 338.7 L647.4 338.7 L644.5 338.6 L641.8 338.4 L639.1 338.2 L636.3 338 L633.6 337.6 L630.9 337.2 L628.5 336.8 L626.3 336.2 L624.4 335.6 L622.9 334.9 L621.6 334.1 L620.6 333.3 L619.7 332.4 L618.9 331.4 L618.1 330.3 L617.4 329.2 L616.9 328 L616.4 326.8 L616 325.5 L615.7 324.1 L615.6 322.7 L615.4 321.2 L615.4 319.6 L615.4 318 L615.6 316.3 L615.9 314.5 L616.2 312.7 L616.6 310.8 L617 309 L617.4 307.2 L617.8 305.4 L618.4 303.7 L619 302 L619.7 300.2 L620.2 298.3 L620.7 296.3 L621 294.3 L621.2 292.2 L621.1 289.9 L621 287.7 L620.8 285.4 L620.6 283.1 L620.3 280.9 L620.1 278.8 L619.8 276.7 L619.4 274.5 L619 272.3 L618.5 270.2 L618.1 268.3 L617.8 266.8 L617.6 265.6Z" fill="#7a6b5c"/>
<path d="M506.6 262.1 L506.8 263.4 L507 265 L507.2 267 L507.4 269.2 L507.6 271.5 L507.8 274 L507.9 276.4 L508.1 279 L508.2 281.8 L508.3 284.8 L508.3 287.8 L508.4 290.7 L508.4 293.4 L508.3 295.9 L508.2 298.1 L508 300 L507.7 301.9 L507.5 303.6 L507.2 305.2 L506.8 306.8 L506.5 308.3 L506 309.7 L505.4 310.9 L504.8 312.1 L504.1 313.3 L503.5 314.5 L503.1 315.8 L502.8 317.2 L502.7 318.8 L502.7 320.5 L502.8 322.2 L503 323.9 L503.3 325.7 L503.9 327.4 L504.6 329 L505.6 330.6 L506.7 332.2 L508 333.7 L509.5 335.1 L511.1 336.5 L512.8 337.9 L514.6 339.1 L516.6 340.2 L518.7 341.3 L521 342.3 L523.4 343.3 L525.8 344.1 L528.3 344.9 L530.8 345.5 L533.3 346 L535.8 346.4 L538.4 346.7 L541.1 346.9 L543.7 347 L546.2 347.1 L548.7 347.2 L551 347.3 L553.3 347.4 L555.6 347.4 L557.8 347.3 L560.1 347.2 L562.4 347 L564.8 346.7 L567.3 346.3 L569.9 345.8 L572.5 345.2 L575.2 344.6 L577.8 343.9 L580.3 343.1 L582.7 342.4 L585 341.7 L587.2 340.9 L589.4 340.2 L591.5 339.3 L593.5 338.5 L595.3 337.5 L597.1 336.5 L598.7 335.3 L600.2 334 L601.6 332.6 L602.8 331.2 L604 329.8 L605 328.6 L606 327.4 L607 326.4 L608 325.3 L608.8 324.3 L609.6 323.4 L610.3 322.6 L610.8 322 L611.3 321.4 L610.7 321 L610.3 321.5 L609.7 322.1 L609 322.9 L608.2 323.8 L607.3 324.7 L606.4 325.7 L605.4 326.8 L604.3 327.9 L603.2 329.2 L602 330.5 L600.8 331.9 L599.5 333.2 L598 334.4 L596.5 335.5 L594.8 336.5 L593 337.4 L591 338.2 L588.9 339 L586.8 339.8 L584.6 340.5 L582.3 341.2 L579.9 341.9 L577.4 342.6 L574.9 343.3 L572.2 344 L569.6 344.6 L567.1 345.1 L564.6 345.5 L562.3 345.8 L560 346 L557.8 346.1 L555.6 346.1 L553.4 346.1 L551.1 346.1 L548.7 346 L546.3 345.9 L543.7 345.8 L541.1 345.6 L538.6 345.4 L536 345.2 L533.5 344.8 L531 344.3 L528.6 343.7 L526.2 343 L523.8 342.1 L521.5 341.2 L519.2 340.3 L517.1 339.2 L515.2 338.1 L513.4 336.9 L511.8 335.7 L510.2 334.3 L508.8 332.9 L507.5 331.5 L506.5 330 L505.6 328.6 L504.9 327 L504.3 325.4 L504 323.8 L503.8 322.1 L503.7 320.4 L503.7 318.8 L503.8 317.4 L504 316.1 L504.5 314.9 L505 313.7 L505.6 312.6 L506.3 311.3 L506.9 310 L507.3 308.5 L507.7 307 L508.1 305.4 L508.3 303.7 L508.6 302 L508.8 300.1 L509 298.1 L509.1 295.9 L509.2 293.4 L509.2 290.7 L509.1 287.8 L509 284.7 L508.9 281.8 L508.8 279 L508.7 276.4 L508.5 273.9 L508.3 271.5 L508 269.1 L507.7 266.9 L507.5 265 L507.3 263.3 L507.2 262.1Z" fill="#7a6b5c"/>
<path d="M341.9 368.4 L342 369.5 L342 371.1 L342.1 372.8 L342.2 374.8 L342.3 376.8 L342.3 378.8 L342.4 380.5 L342.4 382.2 L342.5 383.8 L342.6 385.3 L342.6 386.8 L342.6 388.4 L342.5 389.9 L342.2 391.5 L341.8 393.2 L341.2 394.9 L340.6 396.7 L339.8 398.5 L339 400.4 L338.2 402.4 L337.5 404.4 L336.7 406.5 L335.9 408.6 L335.1 410.9 L334.3 413.1 L333.5 415.3 L332.8 417.4 L332.1 419.3 L331.5 421 L330.9 422.5 L330.3 424 L329.8 425.4 L329.3 426.9 L328.9 428.3 L328.7 429.7 L328.6 431.1 L328.5 432.5 L328.5 433.8 L328.7 435.2 L329 436.5 L329.5 437.8 L330.1 439.2 L330.9 440.4 L331.9 441.7 L333 442.9 L334.2 444.1 L335.6 445.3 L337.1 446.4 L338.7 447.4 L340.5 448.3 L342.4 449.2 L344.4 450 L346.5 450.7 L348.7 451.4 L350.9 452 L353.2 452.6 L355.5 453.1 L357.8 453.5 L360.2 453.8 L362.7 454.1 L365.1 454.3 L367.6 454.5 L370.2 454.7 L372.8 454.9 L375.5 455.1 L378.3 455.3 L381.1 455.4 L383.8 455.5 L386.5 455.6 L389 455.6 L391.3 455.7 L393.6 455.7 L395.8 455.7 L397.9 455.7 L400 455.6 L402.1 455.5 L404.2 455.2 L406.2 454.9 L408.2 454.5 L410.2 454 L412.2 453.5 L414.1 452.9 L415.9 452.3 L417.7 451.6 L419.4 450.8 L421.1 450 L422.7 449.1 L424.3 448.1 L425.7 447.2 L427.1 446.2 L428.3 445.4 L429.5 444.5 L430.5 443.6 L431.5 442.7 L432.4 441.8 L433.1 440.9 L433.8 440.1 L434.4 439.4 L434.9 438.6 L435.2 437.8 L435.4 437 L435.4 436.3 L435.3 435.8 L435.3 435.7 L435.3 435.6 L435.2 434.8 L434.8 434.2 L434.2 433.7 L433.5 433.6 L432.7 433.7 L432.1 434.1 L431.6 434.7 L431.5 435.4 L431.5 435.8 L431.5 436.2 L431.5 436.4 L431.5 436.5 L431.5 436.7 L431.4 436.8 L431.2 437.2 L430.8 437.8 L430.2 438.4 L429.6 439.2 L428.9 440 L428 440.8 L427.1 441.6 L426.1 442.4 L425 443.3 L423.7 444.2 L422.3 445.1 L420.9 445.9 L419.4 446.8 L417.9 447.5 L416.3 448.2 L414.7 448.8 L413 449.3 L411.2 449.8 L409.3 450.2 L407.5 450.6 L405.6 450.9 L403.6 451.2 L401.7 451.4 L399.8 451.5 L397.8 451.6 L395.7 451.6 L393.6 451.6 L391.4 451.6 L389 451.6 L386.5 451.6 L383.9 451.5 L381.2 451.5 L378.4 451.4 L375.7 451.4 L373 451.2 L370.4 451.1 L367.9 450.9 L365.5 450.7 L363.1 450.4 L360.7 450.2 L358.4 449.8 L356.2 449.5 L354 449 L351.9 448.5 L349.7 447.9 L347.7 447.2 L345.7 446.5 L343.8 445.8 L342.1 445 L340.5 444.2 L339.1 443.4 L337.8 442.4 L336.6 441.5 L335.5 440.5 L334.6 439.5 L333.8 438.4 L333.1 437.4 L332.6 436.5 L332.2 435.5 L332 434.6 L331.9 433.5 L331.8 432.5 L331.8 431.3 L331.9 430.1 L332.1 428.9 L332.3 427.7 L332.7 426.4 L333.1 425 L333.6 423.5 L334.1 421.9 L334.7 420.1 L335.3 418.2 L336 416.2 L336.7 414 L337.5 411.7 L338.3 409.5 L339 407.3 L339.7 405.2 L340.4 403.2 L341.2 401.3 L342 399.4 L342.7 397.5 L343.4 395.6 L344 393.8 L344.4 391.9 L344.6 390.1 L344.7 388.4 L344.7 386.8 L344.6 385.2 L344.5 383.6 L344.3 382.1 L344.2 380.5 L344.1 378.7 L344 376.7 L343.8 374.7 L343.7 372.7 L343.5 371 L343.4 369.5 L343.3 368.4Z" fill="#7a6b5c"/>
<path d="M431.2 352.8 L431.3 353.4 L431.6 354.2 L431.9 355.2 L432.2 356.3 L432.5 357.5 L432.8 358.8 L433.1 360.1 L433.3 361.4 L433.6 363 L433.8 364.6 L434 366.2 L434.1 367.9 L434.3 369.6 L434.3 371.2 L434.4 372.8 L434.4 374.5 L434.4 376.1 L434.4 377.8 L434.3 379.4 L434 380.9 L433.7 382.3 L433.2 383.6 L432.6 384.8 L431.8 385.9 L431 387.1 L430.1 388.2 L429.3 389.4 L428.6 390.6 L428 391.8 L427.4 393 L426.8 394.2 L426.2 395.4 L425.7 396.6 L425.3 397.9 L425.1 399.1 L424.9 400.4 L424.9 401.6 L425 402.9 L425.1 404.1 L425.3 405.3 L425.7 406.6 L426.1 407.7 L426.6 408.9 L427.2 410.1 L427.8 411.2 L428.6 412.3 L429.4 413.4 L430.4 414.5 L431.4 415.5 L432.5 416.5 L433.7 417.5 L435 418.5 L436.3 419.4 L437.8 420.3 L439.3 421.2 L440.9 421.9 L442.6 422.6 L444.4 423.2 L446.2 423.8 L448.2 424.3 L450.1 424.8 L452.2 425.2 L454.2 425.5 L456.2 425.8 L458.4 426.1 L460.6 426.2 L462.8 426.4 L465 426.4 L467.2 426.3 L469.3 426.1 L471.4 425.8 L473.4 425.3 L475.4 424.7 L477.3 424 L479.1 423.3 L480.9 422.6 L482.5 422 L484.1 421.4 L485.6 420.7 L487 420.1 L488.4 419.4 L489.6 418.8 L490.8 418.2 L491.9 417.6 L492.9 417 L493.7 416.4 L494.5 415.8 L495.2 415.2 L495.8 414.7 L496.2 414.3 L496.6 414 L495.8 413 L495.4 413.3 L494.9 413.7 L494.3 414.1 L493.6 414.6 L492.9 415.1 L492 415.7 L491.1 416.2 L490.1 416.8 L488.9 417.4 L487.7 418 L486.3 418.6 L484.9 419.2 L483.5 419.8 L481.9 420.4 L480.2 421.1 L478.5 421.7 L476.7 422.4 L474.8 423.1 L472.9 423.7 L471 424.1 L469.1 424.5 L467.1 424.7 L465 424.7 L462.9 424.7 L460.7 424.6 L458.6 424.4 L456.5 424.2 L454.4 423.9 L452.4 423.6 L450.5 423.2 L448.6 422.8 L446.7 422.3 L444.9 421.7 L443.1 421.1 L441.5 420.5 L440 419.8 L438.5 419 L437.1 418.2 L435.8 417.3 L434.6 416.4 L433.5 415.4 L432.4 414.5 L431.4 413.5 L430.5 412.5 L429.7 411.5 L429 410.5 L428.4 409.4 L427.8 408.3 L427.3 407.3 L426.9 406.2 L426.6 405 L426.4 403.9 L426.2 402.8 L426.2 401.6 L426.2 400.4 L426.3 399.3 L426.5 398.2 L426.9 397 L427.3 395.8 L427.8 394.6 L428.4 393.4 L429 392.2 L429.6 391 L430.2 389.9 L430.9 388.8 L431.7 387.6 L432.6 386.5 L433.3 385.2 L434 383.9 L434.5 382.5 L434.8 381 L435 379.4 L435.2 377.8 L435.2 376.2 L435.2 374.5 L435.1 372.8 L435.1 371.2 L435 369.5 L434.8 367.9 L434.6 366.2 L434.4 364.5 L434.2 362.9 L433.9 361.3 L433.7 359.9 L433.4 358.6 L433.1 357.3 L432.8 356.1 L432.4 355 L432.1 354.1 L431.8 353.2 L431.6 352.6Z" fill="#7a6b5c"/>
<path d="M554.4 374.4 L554.5 375.3 L554.5 376.4 L554.6 377.7 L554.7 379.2 L554.8 380.8 L555 382.3 L555.1 383.8 L555.4 385.2 L555.7 386.7 L556 388.2 L556.4 389.6 L556.7 391.1 L556.9 392.5 L557.1 394 L557.3 395.5 L557.4 397.1 L557.5 398.7 L557.5 400.3 L557.5 401.8 L557.3 403.3 L557 404.6 L556.6 405.9 L555.9 407.2 L555.2 408.5 L554.3 409.8 L553.4 411 L552.6 412.3 L551.8 413.7 L551.2 415 L550.5 416.2 L549.9 417.5 L549.4 418.8 L548.9 420 L548.4 421.2 L548.1 422.4 L547.9 423.4 L547.7 424.4 L547.6 425.4 L547.7 426.4 L547.8 427.4 L548.2 428.4 L548.7 429.4 L549.5 430.5 L550.4 431.5 L551.4 432.4 L552.5 433.4 L553.7 434.3 L554.9 435.2 L556.2 436.1 L557.5 436.9 L558.8 437.7 L560.3 438.5 L561.8 439.3 L563.4 440 L565 440.6 L566.8 441.2 L568.7 441.6 L570.6 442 L572.6 442.3 L574.6 442.6 L576.7 442.7 L578.7 442.9 L580.7 443 L582.7 443.2 L584.7 443.3 L586.8 443.3 L588.8 443.3 L590.9 443.3 L592.8 443.1 L594.7 442.9 L596.5 442.6 L598.2 442.1 L599.8 441.6 L601.3 441 L602.8 440.4 L604.2 439.8 L605.5 439.1 L607 438.5 L608.5 437.7 L610.1 437 L611.5 436.2 L612.9 435.4 L614.1 434.7 L615.2 433.9 L616.2 433.2 L617 432.5 L617.6 431.7 L618 431.1 L618.4 430.6 L618.6 430.2 L618.8 429.9 L615.8 427.3 L615.5 427.6 L615.1 428 L614.7 428.4 L614.3 428.7 L613.8 429.1 L613.3 429.6 L612.6 430.1 L611.6 430.6 L610.5 431.3 L609.2 432.1 L607.9 432.9 L606.4 433.7 L605 434.4 L603.7 435.1 L602.3 435.7 L600.9 436.3 L599.6 436.9 L598.3 437.5 L596.9 438 L595.5 438.4 L594.1 438.7 L592.4 438.9 L590.6 439.1 L588.8 439.1 L586.8 439.1 L584.8 439.1 L582.9 439 L580.9 439 L579 438.9 L577 438.7 L575 438.6 L573.1 438.4 L571.2 438.1 L569.5 437.8 L567.8 437.4 L566.2 437 L564.7 436.5 L563.3 435.9 L561.9 435.2 L560.6 434.6 L559.3 433.9 L558 433.1 L556.8 432.4 L555.6 431.6 L554.5 430.8 L553.5 430 L552.6 429.2 L551.8 428.5 L551.3 427.8 L550.9 427.2 L550.7 426.6 L550.6 426 L550.6 425.4 L550.6 424.7 L550.7 423.9 L550.9 423 L551.1 422 L551.4 420.9 L551.8 419.8 L552.3 418.6 L552.8 417.3 L553.4 416 L554 414.7 L554.6 413.5 L555.3 412.3 L556.2 411 L557 409.6 L557.8 408.2 L558.5 406.7 L559 405.2 L559.2 403.5 L559.4 401.9 L559.4 400.3 L559.4 398.6 L559.2 397 L559.1 395.4 L558.9 393.8 L558.6 392.2 L558.3 390.7 L557.9 389.2 L557.5 387.8 L557.1 386.3 L556.8 385 L556.5 383.6 L556.2 382.2 L556 380.6 L555.8 379.1 L555.7 377.6 L555.6 376.3 L555.5 375.2 L555.4 374.4Z" fill="#7a6b5c"/>
<path d="M646.4 373.4 L646.6 374.2 L646.9 375.2 L647.2 376.5 L647.6 377.8 L647.9 379.3 L648.1 380.7 L648.3 382.2 L648.4 383.6 L648.3 385.3 L648.3 387 L648.2 388.8 L648.1 390.6 L648 392.3 L647.9 393.9 L647.9 395.4 L647.9 396.9 L647.9 398.3 L648 399.7 L648.1 401 L648.2 402.3 L648.4 403.5 L648.6 404.7 L648.9 405.7 L649.3 406.7 L649.6 407.6 L650 408.5 L650.5 409.3 L650.9 410.1 L651.4 410.9 L652 411.8 L652.7 412.6 L653.3 413.3 L653.8 414 L654.3 414.5 L654.6 414.9 L655.1 415.3 L655.7 415.5 L656.3 415.5 L656.9 415.2 L657.3 414.7 L657.5 414.1 L657.5 413.5 L657.2 412.9 L656.8 412.5 L656.4 411.9 L655.9 411.2 L655.3 410.5 L654.8 409.8 L654.3 409 L653.9 408.3 L653.5 407.6 L653.1 406.9 L652.8 406.2 L652.4 405.4 L652.1 404.7 L651.9 403.8 L651.6 402.9 L651.5 401.9 L651.4 400.7 L651.3 399.5 L651.2 398.2 L651.2 396.8 L651.1 395.4 L651.1 393.9 L651 392.3 L651 390.6 L651 388.9 L651 387 L651 385.2 L650.9 383.5 L650.7 381.8 L650.3 380.3 L649.9 378.7 L649.3 377.3 L648.7 375.9 L648.2 374.7 L647.8 373.8 L647.4 373Z" fill="#7a6b5c"/>
<path d="M486.7 452.7 L487 453.8 L487.3 455.2 L487.6 456.8 L488 458.6 L488.4 460.5 L488.7 462.5 L488.9 464.5 L489.1 466.6 L489.2 468.8 L489.2 471.1 L489.3 473.5 L489.2 475.9 L489.2 478.3 L489.1 480.6 L488.9 483 L488.7 485.3 L488.4 487.7 L488.1 490.1 L487.8 492.4 L487.5 494.7 L487.3 496.8 L487.1 498.8 L487 500.7 L486.8 502.5 L486.8 504.3 L486.8 506 L486.9 507.8 L487.1 509.5 L487.5 511.2 L487.9 512.8 L488.5 514.4 L489.1 515.9 L489.9 517.5 L490.9 519 L492 520.4 L493.2 521.9 L494.5 523.4 L496 524.9 L497.6 526.3 L499.4 527.8 L501.4 529.1 L503.7 530.3 L506.3 531.5 L509.1 532.5 L512.1 533.5 L515.2 534.4 L518.3 535.2 L521.4 536 L524.4 536.7 L527.4 537.4 L530.3 538 L533.3 538.6 L536.2 539.1 L539.2 539.5 L542.1 539.9 L545.1 540.2 L548.1 540.5 L551.1 540.6 L554.1 540.7 L557.1 540.7 L560 540.6 L562.8 540.6 L565.6 540.6 L568.3 540.6 L571 540.6 L573.7 540.7 L576.3 540.7 L579 540.6 L581.7 540.3 L584.3 539.9 L586.9 539.3 L589.5 538.6 L591.9 537.8 L594.3 536.8 L596.7 535.8 L599 534.7 L601.3 533.5 L603.5 532.2 L605.8 530.8 L608 529.3 L610.1 527.8 L612.2 526.2 L614.1 524.6 L615.9 522.9 L617.5 521.3 L619 519.5 L620.3 517.8 L621.4 516 L622.5 514.3 L623.4 512.8 L624.3 511.3 L625.2 509.8 L626 508.4 L626.6 507 L627.2 505.6 L627.7 504.5 L628.1 503.6 L628.4 502.9 L628.6 502.1 L628.5 501.3 L628.1 500.6 L627.5 500.2 L626.7 500 L625.9 500.1 L625.2 500.5 L624.8 501.1 L624.4 501.9 L624 502.8 L623.4 503.9 L622.9 505.1 L622.2 506.4 L621.5 507.7 L620.7 509.1 L619.8 510.5 L618.8 512.1 L617.8 513.7 L616.8 515.3 L615.6 516.9 L614.3 518.4 L612.9 519.9 L611.3 521.3 L609.5 522.8 L607.6 524.3 L605.5 525.7 L603.4 527.1 L601.3 528.3 L599.1 529.5 L597 530.6 L594.8 531.6 L592.6 532.6 L590.4 533.4 L588.1 534.1 L585.8 534.8 L583.5 535.3 L581.1 535.6 L578.7 535.8 L576.3 535.9 L573.7 535.9 L571.1 535.9 L568.4 535.8 L565.6 535.8 L562.8 535.9 L559.9 536 L557 536 L554.1 536.1 L551.2 536 L548.3 535.9 L545.5 535.8 L542.6 535.5 L539.8 535.1 L536.9 534.7 L534 534.3 L531.1 533.7 L528.3 533.1 L525.4 532.5 L522.4 531.8 L519.3 531.1 L516.3 530.3 L513.3 529.5 L510.4 528.6 L507.8 527.6 L505.5 526.7 L503.5 525.6 L501.7 524.5 L500.1 523.3 L498.6 522.1 L497.2 520.8 L496 519.5 L494.8 518.2 L493.8 516.9 L493 515.6 L492.2 514.4 L491.6 513.1 L491.1 511.7 L490.7 510.3 L490.3 508.9 L490 507.4 L489.9 505.9 L489.8 504.3 L489.8 502.6 L489.9 500.9 L490 499 L490.1 497 L490.2 494.9 L490.4 492.7 L490.7 490.4 L491 488 L491.2 485.6 L491.4 483.1 L491.5 480.8 L491.5 478.4 L491.5 475.9 L491.5 473.5 L491.4 471 L491.3 468.7 L491.1 466.4 L490.9 464.3 L490.5 462.2 L490.1 460.2 L489.6 458.2 L489.1 456.4 L488.6 454.8 L488.1 453.5 L487.9 452.5Z" fill="#7a6b5c"/><path d="M676.3 467.5l1 3.4" stroke="#f3d9c8" stroke-width=".9" fill="none"/></svg>
<div style="left:871.2px;top:61px;width:149.1px;height:272.6px;background:#202020;"></div>
<div style="left:873px;top:62.9px;width:151px;height:269.5px;background:#535353;"></div>
<div style="left:873px;top:62.9px;width:151px;height:14.9px;background:#424242;"></div>
<div style="left:873px;top:64.5px;width:30.1px;height:13.3px;background:#535353;"></div>
<div style="left:903.5px;top:64.6px;width:18.9px;height:13.2px;background:#454545;border:0.5px solid #3b3b3b;border-bottom:none;"></div>
<span class="t pl" style="left:877.4px;top:69.2px;font-size:5.3px;color:#f0f0f0;font-weight:bold;">筆刷設定</span>
<span class="t pl" style="left:907.4px;top:69.2px;font-size:5.3px;color:#a8a8a8;">筆刷</span>
<svg width="1024" height="590" viewBox="0 0 1024 590"><g fill="none" stroke="#d2d2d2" stroke-width=".75"><path d="M1009.4 69.1l1.9 1.9-1.9 1.9M1011.9 69.1l1.9 1.9-1.9 1.9"/><path d="M1017.3 68.3v5.6" stroke="#8a8a8a"/><path d="M1020.8 69.4h3.2M1020.8 71h3.2M1020.8 72.6h3.2" stroke-width=".6"/></g></svg>
<div style="left:888px;top:83.8px;width:20px;height:8.3px;background:#3f3f3f;border:0.6px solid #5c5c5c;border-radius:1px;"></div>
<span class="t pl" style="left:892.6px;top:86.1px;font-size:5.3px;">筆刷</span>
<div style="left:875.7px;top:96.4px;width:44.3px;height:132.4px;background:#505050;border:0.6px solid #404040;"></div>
<div style="left:876.3px;top:97px;width:43.1px;height:10.5px;background:#6c6c6c;"></div>
<span class="t pl" style="left:886.7px;top:100.3px;font-size:5.5px;color:#f2f2f2;">筆尖形狀</span>
<div class="cbc" style="left:879.2px;top:110.1px;"></div>
<span class="t pl" style="left:887px;top:110.5px;font-size:5.3px;font-weight:bold;color:#e6e6e6;">筆刷動態</span>
<div style="left:876.3px;top:117.9px;width:43.1px;height:0.5px;background:#454545;"></div>
<div class="cb" style="left:879.2px;top:120.2px;"></div>
<span class="t pl" style="left:887px;top:120.6px;font-size:5.3px;font-weight:bold;color:#e6e6e6;">散佈</span>
<div style="left:876.3px;top:127.9px;width:43.1px;height:0.5px;background:#454545;"></div>
<div class="cb" style="left:879.2px;top:130.2px;"></div>
<span class="t pl" style="left:887px;top:130.6px;font-size:5.3px;font-weight:bold;color:#e6e6e6;">紋理</span>
<div style="left:876.3px;top:138px;width:43.1px;height:0.5px;background:#454545;"></div>
<div class="cb" style="left:879.2px;top:140.3px;"></div>
<span class="t pl" style="left:887px;top:140.7px;font-size:5.3px;font-weight:bold;color:#e6e6e6;">雙筆刷</span>
<div style="left:876.3px;top:148.1px;width:43.1px;height:0.5px;background:#454545;"></div>
<div class="cb" style="left:879.2px;top:150.4px;"></div>
<span class="t pl" style="left:887px;top:150.8px;font-size:5.3px;font-weight:bold;color:#e6e6e6;">色彩動態</span>
<div style="left:876.3px;top:158.2px;width:43.1px;height:0.5px;background:#454545;"></div>
<div class="cb" style="left:879.2px;top:160.4px;"></div>
<span class="t pl" style="left:887px;top:160.8px;font-size:5.3px;font-weight:bold;color:#e6e6e6;">轉換</span>
<div style="left:876.3px;top:168.2px;width:43.1px;height:0.5px;background:#454545;"></div>
<div class="cb" style="left:879.2px;top:170.5px;"></div>
<span class="t pl" style="left:887px;top:170.9px;font-size:5.3px;font-weight:bold;color:#e6e6e6;">筆刷姿勢</span>
<div style="left:876.3px;top:178.3px;width:43.1px;height:0.5px;background:#454545;"></div>
<div class="cb" style="left:879.2px;top:180.6px;"></div>
<span class="t pl" style="left:887px;top:181px;font-size:5.3px;font-weight:bold;color:#e6e6e6;">雜訊</span>
<div style="left:876.3px;top:188.4px;width:43.1px;height:0.5px;background:#454545;"></div>
<div class="cb" style="left:879.2px;top:190.7px;"></div>
<span class="t pl" style="left:887px;top:191.1px;font-size:5.3px;font-weight:bold;color:#e6e6e6;">潮濕邊緣</span>
<div style="left:876.3px;top:198.4px;width:43.1px;height:0.5px;background:#454545;"></div>
<div class="cb" style="left:879.2px;top:200.7px;"></div>
<span class="t pl" style="left:887px;top:201.1px;font-size:5.3px;font-weight:bold;color:#e6e6e6;">建立</span>
<div style="left:876.3px;top:208.5px;width:43.1px;height:0.5px;background:#454545;"></div>
<div class="cbc" style="left:879.2px;top:210.8px;"></div>
<span class="t pl" style="left:887px;top:211.2px;font-size:5.3px;font-weight:bold;color:#e6e6e6;">平滑化</span>
<div style="left:876.3px;top:218.6px;width:43.1px;height:0.5px;background:#454545;"></div>
<div class="cb" style="left:879.2px;top:220.9px;"></div>
<span class="t pl" style="left:887px;top:221.3px;font-size:5.3px;font-weight:bold;color:#e6e6e6;">保護紋理</span>
<svg width="1024" height="590" viewBox="0 0 1024 590"><path d="M880.3 113l1.3 1.4 2.3-2.9" fill="none" stroke="#222" stroke-width=".9"/><rect x="913.1" y="111.9" width="4.6" height="3.6" fill="none" stroke="#bdbdbd" stroke-width=".6"/><path d="M913.8 111.9v-1.3a1.4 1.4 0 0 1 2.8 0v.5" fill="none" stroke="#bdbdbd" stroke-width=".6"/><path d="M916.5 113.1v1.4" stroke="#bdbdbd" stroke-width=".5"/><rect x="913.1" y="122" width="4.6" height="3.6" fill="none" stroke="#bdbdbd" stroke-width=".6"/><path d="M913.8 122v-1.3a1.4 1.4 0 0 1 2.8 0v.5" fill="none" stroke="#bdbdbd" stroke-width=".6"/><path d="M916.5 123.2v1.4" stroke="#bdbdbd" stroke-width=".5"/><rect x="913.1" y="132" width="4.6" height="3.6" fill="none" stroke="#bdbdbd" stroke-width=".6"/><path d="M913.8 132v-1.3a1.4 1.4 0 0 1 2.8 0v.5" fill="none" stroke="#bdbdbd" stroke-width=".6"/><path d="M916.5 133.2v1.4" stroke="#bdbdbd" stroke-width=".5"/><rect x="913.1" y="142.1" width="4.6" height="3.6" fill="none" stroke="#bdbdbd" stroke-width=".6"/><path d="M913.8 142.1v-1.3a1.4 1.4 0 0 1 2.8 0v.5" fill="none" stroke="#bdbdbd" stroke-width=".6"/><path d="M916.5 143.3v1.4" stroke="#bdbdbd" stroke-width=".5"/><rect x="913.1" y="152.2" width="4.6" height="3.6" fill="none" stroke="#bdbdbd" stroke-width=".6"/><path d="M913.8 152.2v-1.3a1.4 1.4 0 0 1 2.8 0v.5" fill="none" stroke="#bdbdbd" stroke-width=".6"/><path d="M916.5 153.4v1.4" stroke="#bdbdbd" stroke-width=".5"/><rect x="913.1" y="162.2" width="4.6" height="3.6" fill="none" stroke="#bdbdbd" stroke-width=".6"/><path d="M913.8 162.2v-1.3a1.4 1.4 0 0 1 2.8 0v.5" fill="none" stroke="#bdbdbd" stroke-width=".6"/><path d="M916.5 163.4v1.4" stroke="#bdbdbd" stroke-width=".5"/><rect x="913.1" y="172.3" width="4.6" height="3.6" fill="none" stroke="#bdbdbd" stroke-width=".6"/><path d="M913.8 172.3v-1.3a1.4 1.4 0 0 1 2.8 0v.5" fill="none" stroke="#bdbdbd" stroke-width=".6"/><path d="M916.5 173.5v1.4" stroke="#bdbdbd" stroke-width=".5"/><rect x="913.1" y="182.4" width="4.6" height="3.6" fill="none" stroke="#bdbdbd" stroke-width=".6"/><path d="M913.8 182.4v-1.3a1.4 1.4 0 0 1 2.8 0v.5" fill="none" stroke="#bdbdbd" stroke-width=".6"/><path d="M916.5 183.6v1.4" stroke="#bdbdbd" stroke-width=".5"/><rect x="913.1" y="192.5" width="4.6" height="3.6" fill="none" stroke="#bdbdbd" stroke-width=".6"/><path d="M913.8 192.5v-1.3a1.4 1.4 0 0 1 2.8 0v.5" fill="none" stroke="#bdbdbd" stroke-width=".6"/><path d="M916.5 193.7v1.4" stroke="#bdbdbd" stroke-width=".5"/><rect x="913.1" y="202.5" width="4.6" height="3.6" fill="none" stroke="#bdbdbd" stroke-width=".6"/><path d="M913.8 202.5v-1.3a1.4 1.4 0 0 1 2.8 0v.5" fill="none" stroke="#bdbdbd" stroke-width=".6"/><path d="M916.5 203.7v1.4" stroke="#bdbdbd" stroke-width=".5"/><path d="M880.3 213.7l1.3 1.4 2.3-2.9" fill="none" stroke="#222" stroke-width=".9"/><rect x="913.1" y="212.6" width="4.6" height="3.6" fill="none" stroke="#bdbdbd" stroke-width=".6"/><path d="M913.8 212.6v-1.3a1.4 1.4 0 0 1 2.8 0v.5" fill="none" stroke="#bdbdbd" stroke-width=".6"/><path d="M916.5 213.8v1.4" stroke="#bdbdbd" stroke-width=".5"/><rect x="913.1" y="222.7" width="4.6" height="3.6" fill="none" stroke="#bdbdbd" stroke-width=".6"/><path d="M913.8 222.7v-1.3a1.4 1.4 0 0 1 2.8 0v.5" fill="none" stroke="#bdbdbd" stroke-width=".6"/><path d="M916.5 223.9v1.4" stroke="#bdbdbd" stroke-width=".5"/></svg>
<div style="left:925.4px;top:83.1px;width:88.8px;height:55.3px;background:#4a4a4a;border:0.6px solid #383838;"></div>
<svg width="1024" height="590" viewBox="0 0 1024 590"><defs><radialGradient id="soft"><stop offset="0" stop-color="#fff" stop-opacity=".95"/><stop offset=".5" stop-color="#fff" stop-opacity=".6"/><stop offset="1" stop-color="#fff" stop-opacity="0"/></radialGradient><clipPath id="gc"><rect x="925.4" y="83.1" width="88.8" height="55.3"/></clipPath></defs><g stroke="#3d3d3d" stroke-width=".5" fill="none"><path d="M940.77 83.1v55.3"/><path d="M956.14 83.1v55.3"/><path d="M971.51 83.1v55.3"/><path d="M986.88 83.1v55.3"/><path d="M1002.25 83.1v55.3"/><path d="M925.4 98.6h76.8"/><path d="M925.4 114.1h76.8"/><path d="M925.4 129.6h76.8"/></g><circle cx="933.1" cy="88.7" r="4.2" fill="url(#soft)"/><circle cx="948.5" cy="88.5" r="4.9" fill="#fff"/><circle cx="963.8" cy="88.7" r=".9" fill="#fff"/><circle cx="979.2" cy="88.6" r="1.15" fill="#fff"/><path d="M992 87.4l1.5-.8 1.3.4 1.2-.9.9 1.2-.4 1.5.5 1.6-1.2 1.1-.8-1-1.3.1-.4-1.3-1.6-.6z" fill="#f4f4f4"/><rect x="940.97" y="83.6" width="15.17" height="15.2" fill="none" stroke="#4b9bd1" stroke-width=".7"/><ellipse cx="933.1" cy="103.9" rx="4.7" ry="4.2" fill="#b2b2b2"/><circle cx="932.4" cy="105.1" r=".45" fill="#e6e6e6"/><circle cx="935.8" cy="105" r=".45" fill="#f0f0f0"/><circle cx="929.6" cy="102.2" r=".45" fill="#6a6a6a"/><circle cx="935.8" cy="104.4" r=".45" fill="#e6e6e6"/><circle cx="933.3" cy="106.5" r=".45" fill="#e6e6e6"/><circle cx="933.8" cy="102.8" r=".45" fill="#6a6a6a"/><circle cx="930.9" cy="101.9" r=".45" fill="#e6e6e6"/><circle cx="930.7" cy="102.9" r=".45" fill="#6a6a6a"/><circle cx="936.8" cy="104.9" r=".45" fill="#f0f0f0"/><circle cx="930.4" cy="105.2" r=".45" fill="#5e5e5e"/><circle cx="931.7" cy="106.9" r=".45" fill="#6a6a6a"/><circle cx="935.6" cy="105.5" r=".45" fill="#6a6a6a"/><circle cx="930.9" cy="105.8" r=".45" fill="#e6e6e6"/><circle cx="930" cy="102.8" r=".45" fill="#7a7a7a"/><circle cx="931.9" cy="101.8" r=".45" fill="#f0f0f0"/><circle cx="929.1" cy="104.6" r=".45" fill="#f0f0f0"/><circle cx="931.9" cy="106.9" r=".45" fill="#6a6a6a"/><circle cx="935.1" cy="104.9" r=".45" fill="#7a7a7a"/><circle cx="935.6" cy="101.7" r=".45" fill="#f0f0f0"/><circle cx="932.2" cy="103.3" r=".45" fill="#5e5e5e"/><circle cx="929.9" cy="105.4" r=".45" fill="#6a6a6a"/><circle cx="935.6" cy="102.9" r=".45" fill="#e6e6e6"/><circle cx="933.4" cy="101.2" r=".45" fill="#f0f0f0"/><circle cx="931.8" cy="105.7" r=".45" fill="#7a7a7a"/><circle cx="930.6" cy="102.7" r=".45" fill="#e6e6e6"/><circle cx="935.8" cy="103.1" r=".45" fill="#e6e6e6"/><ellipse cx="948.5" cy="103.9" rx="4.7" ry="4.2" fill="#b2b2b2"/><circle cx="951.7" cy="105" r=".45" fill="#5e5e5e"/><circle cx="952.3" cy="103.7" r=".45" fill="#f0f0f0"/><circle cx="947.6" cy="100.6" r=".45" fill="#f0f0f0"/><circle cx="951.3" cy="104.2" r=".45" fill="#6a6a6a"/><circle cx="946.2" cy="102.3" r=".45" fill="#6a6a6a"/><circle cx="948.6" cy="102.6" r=".45" fill="#6a6a6a"/><circle cx="945.2" cy="105.9" r=".45" fill="#7a7a7a"/><circle cx="950.9" cy="105.1" r=".45" fill="#5e5e5e"/><circle cx="948.2" cy="105.2" r=".45" fill="#7a7a7a"/><circle cx="949.9" cy="102.5" r=".45" fill="#7a7a7a"/><circle cx="951.9" cy="103.6" r=".45" fill="#7a7a7a"/><circle cx="950" cy="103.5" r=".45" fill="#6a6a6a"/><circle cx="950.4" cy="106.3" r=".45" fill="#e6e6e6"/><circle cx="945.2" cy="104.2" r=".45" fill="#f0f0f0"/><circle cx="948.1" cy="105.2" r=".45" fill="#5e5e5e"/><circle cx="946.3" cy="105.9" r=".45" fill="#6a6a6a"/><circle cx="947.3" cy="101.5" r=".45" fill="#5e5e5e"/><circle cx="946.4" cy="101.4" r=".45" fill="#7a7a7a"/><circle cx="951.4" cy="102" r=".45" fill="#5e5e5e"/><circle cx="946.4" cy="105.3" r=".45" fill="#e6e6e6"/><circle cx="945.8" cy="104.2" r=".45" fill="#6a6a6a"/><circle cx="950.2" cy="104.6" r=".45" fill="#6a6a6a"/><circle cx="951" cy="105.7" r=".45" fill="#e6e6e6"/><circle cx="950.1" cy="103.9" r=".45" fill="#e6e6e6"/><circle cx="951.6" cy="103" r=".45" fill="#e6e6e6"/><circle cx="950.8" cy="101.9" r=".45" fill="#6a6a6a"/><ellipse cx="964.1" cy="104.2" rx="5.6" ry="3.5" fill="#f6f6f6" transform="rotate(-8 963.8 104.2)"/><ellipse cx="979.2" cy="104.2" rx="1.7" ry="4.3" fill="#f2f2f2"/><rect x="991" y="100.3" width="7.2" height="7.4" rx="2.4" fill="#ededed"/><path d="M928.1 119.4l2.2-2.4 2.8 1.1 2.9-.8 1.7 1.7-1 2.7-1.5 1.8-1.1-1.8-2.6.4-1.3-1.5-2.3-.2z" fill="#e6e6e6"/><path d="M931.1 119.1h3M933.1 120.5h2.5M930.1 120.3l1.5 1.5" stroke="#4a4a4a" stroke-width=".5"/><path d="M943.5 119.4l2.2-2.4 2.8 1.1 2.9-.8 1.7 1.7-1 2.7-1.5 1.8-1.1-1.8-2.6.4-1.3-1.5-2.3-.2z" fill="#e6e6e6"/><path d="M946.5 119.1h3M948.5 120.5h2.5M945.5 120.3l1.5 1.5" stroke="#4a4a4a" stroke-width=".5"/><path d="M961.6 123.5v-4.5a2.2 2.6 0 0 1 4.4 0v4.5z" fill="#d2d2d2"/><path d="M974.6 118.5l3-2 3.5.4 2 1.8-1.5 1.4 2 1.8-3.5.6-3-1.6-3.5-.3z" fill="#dcdcdc"/><path d="M976.2 119.2h6M977.7 120.9h5" stroke="#4a4a4a" stroke-width=".5"/><circle cx="991.6" cy="116.4" r=".32" fill="#c8c8c8"/><circle cx="992.2" cy="117.9" r=".32" fill="#c8c8c8"/><circle cx="996.8" cy="121.7" r=".32" fill="#c8c8c8"/><circle cx="997.5" cy="119.3" r=".32" fill="#c8c8c8"/><circle cx="994" cy="121" r=".32" fill="#c8c8c8"/><circle cx="994.5" cy="115.9" r=".32" fill="#c8c8c8"/><circle cx="990.9" cy="120.2" r=".32" fill="#c8c8c8"/><circle cx="992.8" cy="119.5" r=".32" fill="#c8c8c8"/><circle cx="996.9" cy="119" r=".32" fill="#c8c8c8"/><circle cx="993" cy="115.7" r=".32" fill="#c8c8c8"/><circle cx="994.7" cy="117.5" r=".32" fill="#c8c8c8"/><circle cx="993.9" cy="118.8" r=".32" fill="#c8c8c8"/><circle cx="996.3" cy="117.1" r=".32" fill="#c8c8c8"/><circle cx="996.6" cy="118.3" r=".32" fill="#c8c8c8"/><circle cx="995.1" cy="122.8" r=".32" fill="#c8c8c8"/><circle cx="991.1" cy="119.6" r=".32" fill="#c8c8c8"/><circle cx="991.5" cy="117.1" r=".32" fill="#c8c8c8"/><circle cx="994.7" cy="118" r=".32" fill="#c8c8c8"/><circle cx="994.7" cy="122.4" r=".32" fill="#c8c8c8"/><circle cx="995.1" cy="118" r=".32" fill="#c8c8c8"/><circle cx="990.8" cy="119.9" r=".32" fill="#c8c8c8"/><circle cx="998.5" cy="119.4" r=".32" fill="#c8c8c8"/><circle cx="992.9" cy="120" r=".32" fill="#c8c8c8"/><circle cx="992.6" cy="118.2" r=".32" fill="#c8c8c8"/><circle cx="995.9" cy="116.2" r=".32" fill="#c8c8c8"/><circle cx="991.9" cy="123.4" r=".32" fill="#c8c8c8"/><circle cx="995.6" cy="120.3" r=".32" fill="#c8c8c8"/><circle cx="992.2" cy="120.2" r=".32" fill="#c8c8c8"/><circle cx="990" cy="120.2" r=".32" fill="#c8c8c8"/><circle cx="994.5" cy="119.6" r=".32" fill="#c8c8c8"/><circle cx="996.6" cy="118.4" r=".32" fill="#c8c8c8"/><circle cx="992" cy="116.5" r=".32" fill="#c8c8c8"/><circle cx="996.5" cy="121.5" r=".32" fill="#c8c8c8"/><circle cx="994.1" cy="118" r=".32" fill="#c8c8c8"/><g clip-path="url(#gc)"><circle cx="937.4" cy="134.4" r=".45" fill="#e8e8e8"/><circle cx="934.6" cy="131.4" r=".45" fill="#e8e8e8"/><circle cx="938" cy="136.8" r=".45" fill="#e8e8e8"/><circle cx="932.7" cy="137" r=".45" fill="#e8e8e8"/><circle cx="928.5" cy="132.1" r=".45" fill="#e8e8e8"/><circle cx="938.5" cy="130.9" r=".45" fill="#e8e8e8"/><circle cx="934.1" cy="134.7" r=".45" fill="#e8e8e8"/><circle cx="934.8" cy="135.9" r=".45" fill="#e8e8e8"/><circle cx="934.1" cy="134.7" r=".45" fill="#e8e8e8"/><circle cx="937.9" cy="132" r=".45" fill="#e8e8e8"/><circle cx="933.6" cy="130.9" r=".45" fill="#e8e8e8"/><circle cx="936.4" cy="136.9" r=".45" fill="#e8e8e8"/><path d="M943 132.2h8l2.5 1.2-.5 2.8-2.5 1-3-.6-4 .2-1.5-1.8z" fill="#bdbdbd"/><path d="M944.5 134.2h7M946.5 136h6" stroke="#555" stroke-width=".6"/><rect x="958.3" y="132.2" width="11" height="6.5" fill="#5e5e5e"/><circle cx="981.3" cy="136.8" r="1.05" fill="#f3f3f3"/><circle cx="981.3" cy="137.7" r="1.05" fill="#f3f3f3"/><circle cx="980.2" cy="138" r="1.05" fill="#f3f3f3"/><circle cx="980.3" cy="135.4" r="1.05" fill="#f3f3f3"/><circle cx="976.5" cy="135.2" r="1.05" fill="#f3f3f3"/><circle cx="978.2" cy="137.1" r="1.05" fill="#f3f3f3"/><circle cx="979.4" cy="134.8" r="1.05" fill="#f3f3f3"/><circle cx="979" cy="132.1" r="1.05" fill="#f3f3f3"/><circle cx="977.7" cy="132.8" r="1.05" fill="#f3f3f3"/><circle cx="976.3" cy="134.9" r="1.05" fill="#f3f3f3"/><circle cx="979.8" cy="134.6" r="1.05" fill="#f3f3f3"/><circle cx="980.4" cy="136.9" r="1.05" fill="#f3f3f3"/><circle cx="981.1" cy="133.2" r="1.05" fill="#f3f3f3"/><circle cx="977" cy="133.5" r="1.05" fill="#f3f3f3"/><ellipse cx="994.6" cy="135.4" rx="4.7" ry="4.5" fill="#fff"/></g><rect x="1008" y="84.8" width="4.5" height="30.8" rx="2.2" fill="#6a6a6a"/></svg>
<span class="t num" style="left:925.4px;top:95px;">30</span>
<span class="t num" style="left:940.8px;top:95px;">123</span>
<span class="t num" style="left:956.1px;top:95px;">8</span>
<span class="t num" style="left:971.5px;top:95px;">10</span>
<span class="t num" style="left:986.9px;top:95px;">25</span>
<span class="t num" style="left:925.4px;top:110.5px;">100</span>
<span class="t num" style="left:940.8px;top:110.5px;">50</span>
<span class="t num" style="left:956.1px;top:110.5px;">50</span>
<span class="t num" style="left:971.5px;top:110.5px;">35</span>
<span class="t num" style="left:986.9px;top:110.5px;">35</span>
<span class="t num" style="left:925.4px;top:126px;">50</span>
<span class="t num" style="left:940.8px;top:126px;">60</span>
<span class="t num" style="left:956.1px;top:126px;">100</span>
<span class="t num" style="left:971.5px;top:126px;">127</span>
<span class="t num" style="left:986.9px;top:126px;">284</span>
<span class="t pl" style="left:925.3px;top:145.1px;">尺寸</span>
<div class="in" style="left:981.6px;top:143.2px;width:32.6px;height:7.9px;"></div><span class="t pl sq" style="left:983.6px;top:145.2px;font-size:5.9px;color:#c6c6c6;">10 像素</span>
<div style="left:927px;top:155.8px;width:85.6px;height:0.7px;background:#7e7e7e;"></div>
<div class="cb" style="left:925.2px;top:165.4px;"></div><span class="t pl" style="left:932.9px;top:165.3px;font-weight:bold;">翻轉 X</span>
<div class="cb" style="left:949.5px;top:165.4px;"></div><span class="t pl" style="left:957px;top:165.3px;font-weight:bold;">翻轉 Y</span>
<div style="left:980.4px;top:164.8px;width:37.3px;height:36px;border:0.5px solid #5f5f5f;background:#525252;"></div>
<span class="t pl" style="left:927px;top:181.3px;">角度:</span>
<div class="in" style="left:941.2px;top:179.5px;width:30.4px;height:8.2px;"></div><span class="t pl sq" style="left:943.3px;top:181.5px;font-size:5.9px;color:#c6c6c6;">0°</span>
<span class="t pl" style="left:927px;top:194.1px;">圓度:</span>
<div class="in" style="left:941.2px;top:192px;width:30.4px;height:8.2px;"></div><span class="t pl sq" style="left:943.3px;top:194.1px;font-size:5.9px;color:#c6c6c6;">100%</span>
<span class="t pl" style="left:925.3px;top:205.9px;">硬度</span>
<div class="in" style="left:984.8px;top:204px;width:29.6px;height:7.7px;"></div><span class="t pl sq" style="left:986.8px;top:206.1px;font-size:5.9px;color:#c6c6c6;">100%</span>
<div style="left:927px;top:215.1px;width:85.6px;height:0.7px;background:#7e7e7e;"></div>
<div class="cbc" style="left:925.1px;top:225.6px;"></div><span class="t pl" style="left:932.7px;top:225.7px;font-weight:bold;">間距</span>
<div class="in" style="left:984.8px;top:224.8px;width:29.6px;height:7.7px;"></div><span class="t pl sq" style="left:986.8px;top:226.7px;font-size:5.9px;color:#c6c6c6;">5%</span>
<div style="left:927px;top:235.7px;width:85.6px;height:0.7px;background:#7e7e7e;"></div>
<svg width="1024" height="590" viewBox="0 0 1024 590"><g fill="#f0f0f0"><path d="M930.1 157.5l2.6 4.5h-5.2z"/><path d="M1012.9 216.8l2.6 4.5h-5.2z"/><path d="M928.4 237.4l2.6 4.5h-5.2z"/></g><path d="M926.2 228.5l1.3 1.4 2.3-2.9" fill="none" stroke="#222" stroke-width=".9"/><circle cx="998.9" cy="183" r="12.5" fill="none" stroke="#b4b4b4" stroke-width=".65"/><path d="M986.4 183h25M998.9 170.5v25" stroke="#777" stroke-width=".5"/><circle cx="998.9" cy="170.6" r="1.4" fill="#f2f2f2"/><circle cx="998.9" cy="195.4" r="1.4" fill="#f2f2f2"/><path d="M1011.5 181.1l3.4 1.9-3.4 1.9z" fill="#f2f2f2"/></svg>
<div style="left:876px;top:266px;width:139px;height:47px;background:#777777;box-shadow:0 0 0 .6px #636363;"></div>
<div style="left:875.5px;top:316.1px;width:142.2px;height:0.6px;background:#474747;"></div>
<svg width="1024" height="590" viewBox="0 0 1024 590"><path d="M894.3 288.3C905 284 915 281.8 923 281.9c14 .2 26 13 44 14.5 10 .8 21-2 30-5.3-9 4.5-20 8-30 7.4-18-1-30-13.5-44-14-8-.3-18 1.5-28.7 3.8z" fill="#fff"/><g fill="none" stroke="#c8c8c8" stroke-width=".6"><path d="M983.3 322.6c1.3-1.7 3.9-1.7 5.2 0-1.3 1.7-3.9 1.7-5.2 0z"/><path d="M989.3 325.3l2.6-5.2" stroke-width=".8"/><path d="M998.4 320h5.4v5.4h-3.4l-2-2z"/><path d="M998.4 323.4h2v2" /></g></svg>
<div style="left:873.3px;top:328.6px;width:150.7px;height:3.9px;background:#5a5a5a;border-top:0.5px solid #444;"></div>
</div></body></html>
